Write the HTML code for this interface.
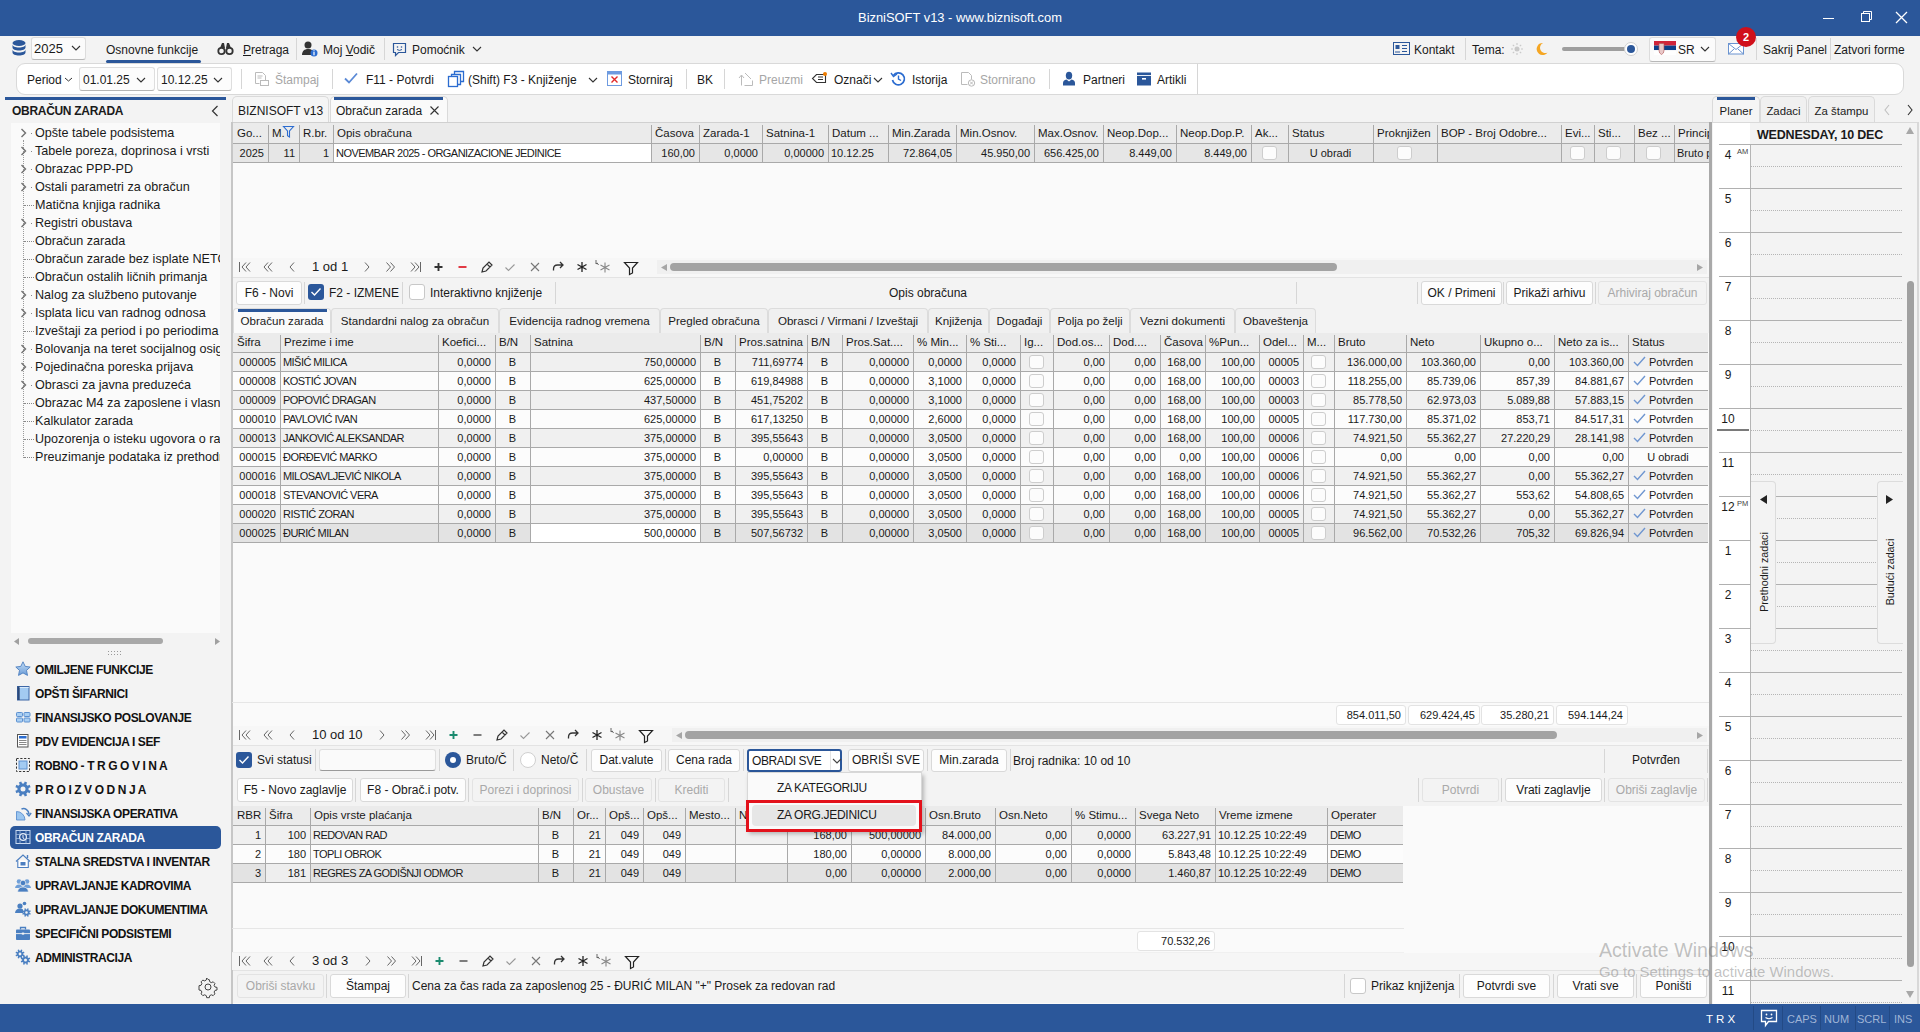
<!DOCTYPE html><html><head><meta charset="utf-8"><title>BizniSOFT</title><style>
*{margin:0;padding:0;box-sizing:border-box}
html,body{width:1920px;height:1032px;overflow:hidden;background:#f3f3f3;font-family:"Liberation Sans",sans-serif;color:#1a1a1a}
.t{position:absolute;white-space:nowrap;font-size:12px;line-height:14px}
.b{position:absolute}
.g{font-size:11px;line-height:19px;overflow:hidden;padding:0 4px}
.dis{color:#a6a6a6}
.btn{position:absolute;background:#fdfdfd;border:1px solid #d9d9d9;border-radius:3px;font-size:12px;text-align:center;white-space:nowrap}
.btn.d{background:#f3f3f3;color:#a9a9a9;border-color:#e3e3e3}
.sep{position:absolute;width:1px;background:#d6d6d6}
.cb{position:absolute;width:15px;height:15px;border:1px solid #c8c8c8;border-radius:3px;background:#fff}
.cbon{position:absolute;width:15px;height:15px;border-radius:3px;background:#2b579a}
svg{position:absolute;overflow:visible}
</style></head><body>
<div class="b " style="left:0px;top:0px;width:1920px;height:36px;background:#2b579a"></div>
<div class="t " style="left:0px;top:11px;color:#fff;font-size:12.9px;width:1920px;text-align:center">BizniSOFT v13 - www.biznisoft.com</div>
<svg style="left:1820px;top:10px" width="100" height="16"><line x1="3" y1="8.5" x2="14" y2="8.5" stroke="#fff" stroke-width="1"/><rect x="41.5" y="3.5" width="8" height="8" fill="none" stroke="#fff"/><path d="M43.5 3.5V1.5h8v8h-2" fill="none" stroke="#fff"/><path d="M76 2L87 13M87 2L76 13" stroke="#fff" stroke-width="1.3"/></svg>
<svg style="left:12px;top:40px" width="14" height="16"><ellipse cx="7" cy="3" rx="6.5" ry="3" fill="#2b579a"/><path d="M0.5 4.5v3c0 1.7 2.9 3 6.5 3s6.5-1.3 6.5-3v-3c0 1.7-2.9 3-6.5 3s-6.5-1.3-6.5-3z" fill="#2b579a"/><path d="M0.5 9.5v3c0 1.7 2.9 3 6.5 3s6.5-1.3 6.5-3v-3c0 1.7-2.9 3-6.5 3s-6.5-1.3-6.5-3z" fill="#2b579a"/></svg>
<div class="b " style="left:31px;top:37px;width:55px;height:23px;background:#fbfbfb;border:1px solid #dcdcdc;border-bottom-color:#b8b8b8;border-radius:3px"></div>
<div class="t " style="left:34px;top:42px;font-size:13px">2025</div>
<svg style="left:71px;top:45px" width="10" height="6"><path d="M1 1l4 4 4-4" fill="none" stroke="#333" stroke-width="1.1"/></svg>
<div class="t " style="left:106px;top:43px;font-size:12px">Osnovne funkcije</div>
<div class="b " style="left:106px;top:60px;width:95px;height:3px;background:#2b579a;border-radius:2px"></div>
<svg style="left:218px;top:42px" width="15" height="13"><circle cx="3.5" cy="9" r="3.2" fill="none" stroke="#333" stroke-width="1.8"/><circle cx="11.5" cy="9" r="3.2" fill="none" stroke="#333" stroke-width="1.8"/><path d="M2 6L4 1h2l1 5M13 6L11 1H9L8 6" fill="#333"/></svg>
<div class="t" style="left:243px;top:43px;font-size:12px"><u>P</u>retraga</div>
<div class="sep" style="left:296px;top:38px;height:22px"></div>
<svg style="left:302px;top:41px" width="16" height="16"><circle cx="6" cy="4" r="3.5" fill="#333"/><path d="M0 14c0-4 2.5-6 6-6s4 1 4.5 2L9 14z" fill="#333"/><circle cx="12" cy="12" r="3.5" fill="#2b6cd0"/><rect x="11.4" y="11" width="1.2" height="3.3" fill="#fff"/><rect x="11.4" y="9.3" width="1.2" height="1.1" fill="#fff"/></svg>
<div class="t" style="left:323px;top:43px;font-size:12px">Moj <u>V</u>odič</div>
<div class="sep" style="left:384px;top:38px;height:22px"></div>
<svg style="left:392px;top:42px" width="15" height="14"><path d="M1.5 1.5h12v9h-7l-3 3v-3h-2z" fill="none" stroke="#2b579a" stroke-width="1.2"/><circle cx="5.5" cy="5" r=".8" fill="#2b579a"/><circle cx="9.5" cy="5" r=".8" fill="#2b579a"/><path d="M5 7.5q2.5 1.8 5 0" fill="none" stroke="#2b579a"/></svg>
<div class="t " style="left:412px;top:43px;font-size:12px">Pomoćnik</div>
<svg style="left:472px;top:46px" width="10" height="6"><path d="M1 1l4 4 4-4" fill="none" stroke="#333" stroke-width="1.1"/></svg>
<svg style="left:1393px;top:42px" width="17" height="13"><rect x="0.5" y="0.5" width="16" height="12" fill="none" stroke="#2b579a"/><rect x="2.5" y="3" width="4" height="4" fill="#2b579a"/><path d="M2 10h5M9 3.5h5M9 6.5h5M9 9.5h5" stroke="#2b579a"/></svg>
<div class="t " style="left:1414px;top:43px;font-size:12px">Kontakt</div>
<div class="sep" style="left:1465px;top:38px;height:22px"></div>
<div class="t " style="left:1472px;top:43px;font-size:12px">Tema:</div>
<svg style="left:1511px;top:43px" width="12" height="12"><circle cx="6" cy="6" r="2.5" fill="#c8c8c8"/><path d="M6 0v2M6 10v2M0 6h2M10 6h2M1.8 1.8l1.4 1.4M8.8 8.8l1.4 1.4M1.8 10.2l1.4-1.4M8.8 3.2l1.4-1.4" stroke="#c8c8c8" stroke-width="1.1"/></svg>
<svg style="left:1536px;top:42px" width="12" height="13"><path d="M7 1a6 6 0 1 0 4.5 9.5A5 5 0 0 1 7 1z" fill="#f5a623"/></svg>
<div class="b " style="left:1562px;top:47px;width:72px;height:4px;background:#9e9e9e;border-radius:2px"></div>
<div class="b " style="left:1624px;top:42px;width:14px;height:14px;background:#fff;border:1px solid #d0d0d0;border-radius:7px"></div>
<div class="b " style="left:1627px;top:45px;width:8px;height:8px;background:#2b579a;border-radius:4px"></div>
<div class="b " style="left:1649px;top:37px;width:67px;height:25px;background:#fbfbfb;border:1px solid #dcdcdc;border-bottom-color:#b8b8b8;border-radius:3px"></div>
<svg style="left:1654px;top:41px" width="22" height="14"><rect width="22" height="4.6" fill="#d0243a"/><rect y="4.6" width="22" height="4.6" fill="#0c3f8a"/><rect y="9.2" width="22" height="4.8" fill="#fff"/><path d="M5 2.5h5v7q0 3-2.5 4-2.5-1-2.5-4z" fill="#e8c8c8" stroke="#b05050" stroke-width=".6"/></svg>
<div class="t " style="left:1678px;top:43px;font-size:12px">SR</div>
<svg style="left:1700px;top:46px" width="10" height="6"><path d="M1 1l4 4 4-4" fill="none" stroke="#333" stroke-width="1.1"/></svg>
<svg style="left:1728px;top:43px" width="16" height="12"><rect x="0.5" y="0.5" width="15" height="10.5" fill="#fff" stroke="#6a93d0"/><path d="M0.5 0.5l7.5 6 7.5-6M0.5 11l5.5-5M15.5 11l-5.5-5" fill="none" stroke="#6a93d0"/></svg>
<div class="b " style="left:1736px;top:27px;width:20px;height:20px;background:#d0101b;border-radius:10px"></div>
<div class="t " style="left:1736px;top:30px;width:20px;text-align:center;color:#fff;font-weight:bold;font-size:11px">2</div>
<div class="sep" style="left:1756px;top:38px;height:22px"></div>
<div class="t " style="left:1763px;top:43px;font-size:12px">Sakrij Panel</div>
<div class="sep" style="left:1830px;top:38px;height:22px"></div>
<div class="t " style="left:1834px;top:43px;font-size:12px">Zatvori forme</div>
<div class="b " style="left:16px;top:63px;width:1888px;height:32px;background:#fff;border:1px solid #d9d9d9;border-radius:9px"></div>
<div class="t " style="left:27px;top:73px;font-size:12px">Period</div>
<svg style="left:64px;top:77px" width="9" height="5"><path d="M1 1l3.5 3 3.5-3" fill="none" stroke="#333"/></svg>
<div class="b " style="left:79px;top:67px;width:76px;height:24px;background:#fcfcfc;border:1px solid #dedede;border-bottom-color:#b5b5b5;border-radius:3px"></div>
<div class="t " style="left:83px;top:73px;font-size:12px">01.01.25</div>
<svg style="left:136px;top:77px" width="10" height="6"><path d="M1 1l4 4 4-4" fill="none" stroke="#333" stroke-width="1.1"/></svg>
<div class="b " style="left:157px;top:67px;width:75px;height:24px;background:#fcfcfc;border:1px solid #dedede;border-bottom-color:#b5b5b5;border-radius:3px"></div>
<div class="t " style="left:161px;top:73px;font-size:12px">10.12.25</div>
<svg style="left:213px;top:77px" width="10" height="6"><path d="M1 1l4 4 4-4" fill="none" stroke="#333" stroke-width="1.1"/></svg>
<div class="sep" style="left:241px;top:69px;height:20px"></div>
<svg style="left:253px;top:71px" width="16" height="16"><path d="M2.5 1.5h7l3 3v5" fill="none" stroke="#bbb"/><path d="M2.5 1.5v11h4" fill="none" stroke="#bbb"/><rect x="7.5" y="9.5" width="8" height="5" fill="none" stroke="#bbb"/><path d="M4.5 5h5M4.5 7h4" stroke="#bbb"/></svg>
<div class="t dis" style="left:275px;top:73px;font-size:12px">Štampaj</div>
<div class="sep" style="left:332px;top:69px;height:20px"></div>
<svg style="left:344px;top:72px" width="14" height="12"><path d="M1 6.5l4 4 8-9" fill="none" stroke="#5b8ad6" stroke-width="1.8"/></svg>
<div class="t " style="left:366px;top:73px;font-size:12px">F11 - Potvrdi</div>
<svg style="left:448px;top:71px" width="16" height="16"><rect x="0.5" y="5.5" width="9" height="10" fill="none" stroke="#2b6cd0" stroke-width="1.3"/><path d="M3.5 5.5v-2h9v10h-3M6.5 3.5v-3h9v10h-3" fill="none" stroke="#2b6cd0" stroke-width="1.3"/></svg>
<div class="t " style="left:468px;top:73px;font-size:12px">(Shift) F3 - Knjiženje</div>
<svg style="left:588px;top:77px" width="10" height="6"><path d="M1 1l4 4 4-4" fill="none" stroke="#333" stroke-width="1.1"/></svg>
<svg style="left:607px;top:71px" width="15" height="15"><rect x="0.5" y="0.5" width="14" height="14" fill="#fff" stroke="#6e9be0"/><rect x="0.5" y="0.5" width="14" height="3" fill="#6e9be0"/><path d="M4.5 5.5l6 6M10.5 5.5l-6 6" stroke="#e02828" stroke-width="1.4"/></svg>
<div class="t " style="left:628px;top:73px;font-size:12px">Storniraj</div>
<div class="sep" style="left:686px;top:69px;height:20px"></div>
<div class="t " style="left:697px;top:73px;font-size:12px">BK</div>
<div class="sep" style="left:724px;top:69px;height:20px"></div>
<svg style="left:738px;top:71px" width="15" height="15"><path d="M3.5 14.5v-10M1 7l2.5-3L6 7" fill="none" stroke="#bbb"/><path d="M6.5 14.5h8v-5" fill="none" stroke="#bbb"/><path d="M7 2l6 6" stroke="#bbb"/></svg>
<div class="t dis" style="left:759px;top:73px;font-size:12px">Preuzmi</div>
<svg style="left:811px;top:72px" width="16" height="13"><path d="M5.5 2.5h9v8h-9l-4-4z" fill="none" stroke="#333" stroke-width="1.1"/><path d="M7 5h5M7 7.5h5" stroke="#333"/><circle cx="14" cy="2" r="2" fill="#f07d00"/></svg>
<div class="t " style="left:834px;top:73px;font-size:12px">Označi</div>
<svg style="left:873px;top:77px" width="10" height="6"><path d="M1 1l4 4 4-4" fill="none" stroke="#333" stroke-width="1.1"/></svg>
<svg style="left:891px;top:71px" width="15" height="15"><path d="M2.4 4.5A6 6 0 1 1 1.5 9" fill="none" stroke="#2b6cd0" stroke-width="1.7"/><path d="M0 2l2.5 3.5L6 3" fill="none" stroke="#2b6cd0" stroke-width="1.4"/><path d="M7.5 4.5v3.5l2.5 1.5" fill="none" stroke="#2b6cd0" stroke-width="1.4"/></svg>
<div class="t " style="left:912px;top:73px;font-size:12px">Istorija</div>
<svg style="left:960px;top:71px" width="15" height="16"><path d="M1.5 1.5h7l3 3v4M1.5 1.5v12h6" fill="none" stroke="#bbb"/><circle cx="11.5" cy="12" r="3.2" fill="none" stroke="#bbb"/><path d="M10 10.5l3 3M13 10.5l-3 3" stroke="#bbb"/></svg>
<div class="t dis" style="left:980px;top:73px;font-size:12px">Stornirano</div>
<div class="sep" style="left:1049px;top:69px;height:20px"></div>
<svg style="left:1063px;top:71px" width="14" height="15"><ellipse cx="6" cy="4.6" rx="3.2" ry="3.9" fill="#2b579a"/><path d="M0 14.5v-2.5q0-3 3.5-3.5L6 10.5l2.5-2Q12 9 12 12v2.5z" fill="#2b579a"/></svg>
<div class="t " style="left:1083px;top:73px;font-size:12px">Partneri</div>
<svg style="left:1137px;top:71px" width="15" height="15"><rect x="0" y="1.5" width="14" height="2.6" fill="#2b579a"/><rect x="0" y="5" width="14" height="9.5" fill="#2b579a"/><rect x="5" y="7" width="4" height="1.6" fill="#fff"/></svg>
<div class="t " style="left:1157px;top:73px;font-size:12px">Artikli</div>
<div class="sep" style="left:1197px;top:64px;height:30px"></div>
<div class="b " style="left:5px;top:97px;width:221px;height:3px;background:#2b579a"></div>
<div class="t " style="left:12px;top:104px;font-size:12px;font-weight:bold;letter-spacing:-0.3px">OBRAČUN ZARADA</div>
<svg style="left:211px;top:105px" width="8" height="12"><path d="M6.5 1L1.5 6l5 5" fill="none" stroke="#333" stroke-width="1.2"/></svg>
<div class="b " style="left:11px;top:123px;width:209px;height:510px;background:#fafafa"></div>
<div class="b" style="left:23px;top:140px;width:0;height:318px;border-left:1px dotted #9a9a9a"></div>
<div style="position:absolute;left:11px;top:123px;width:209px;height:510px;overflow:hidden">
<svg style="left:8.5px;top:4.8px" width="7" height="10"><path d="M1.5 1l4 4-4 4" fill="none" stroke="#707070" stroke-width="1.4"/></svg>
<div class="b" style="left:20px;top:9.8px;width:1px;height:1px;background:#888"></div>
<div class="t" style="left:24px;top:2.8px;font-size:12.6px">Opšte tabele podsistema</div>
<svg style="left:8.5px;top:22.8px" width="7" height="10"><path d="M1.5 1l4 4-4 4" fill="none" stroke="#707070" stroke-width="1.4"/></svg>
<div class="b" style="left:20px;top:27.8px;width:1px;height:1px;background:#888"></div>
<div class="t" style="left:24px;top:20.8px;font-size:12.6px">Tabele poreza, doprinosa i vrsti</div>
<svg style="left:8.5px;top:40.8px" width="7" height="10"><path d="M1.5 1l4 4-4 4" fill="none" stroke="#707070" stroke-width="1.4"/></svg>
<div class="b" style="left:20px;top:45.8px;width:1px;height:1px;background:#888"></div>
<div class="t" style="left:24px;top:38.8px;font-size:12.6px">Obrazac PPP-PD</div>
<svg style="left:8.5px;top:58.8px" width="7" height="10"><path d="M1.5 1l4 4-4 4" fill="none" stroke="#707070" stroke-width="1.4"/></svg>
<div class="b" style="left:20px;top:63.8px;width:1px;height:1px;background:#888"></div>
<div class="t" style="left:24px;top:56.8px;font-size:12.6px">Ostali parametri za obračun</div>
<div class="b" style="left:13px;top:81.8px;width:10px;height:0;border-top:1px dotted #888"></div>
<div class="t" style="left:24px;top:74.8px;font-size:12.6px">Matična knjiga radnika</div>
<svg style="left:8.5px;top:94.8px" width="7" height="10"><path d="M1.5 1l4 4-4 4" fill="none" stroke="#707070" stroke-width="1.4"/></svg>
<div class="b" style="left:20px;top:99.8px;width:1px;height:1px;background:#888"></div>
<div class="t" style="left:24px;top:92.8px;font-size:12.6px">Registri obustava</div>
<div class="b" style="left:13px;top:117.8px;width:10px;height:0;border-top:1px dotted #888"></div>
<div class="t" style="left:24px;top:110.8px;font-size:12.6px">Obračun zarada</div>
<div class="b" style="left:13px;top:135.8px;width:10px;height:0;border-top:1px dotted #888"></div>
<div class="t" style="left:24px;top:128.8px;font-size:12.6px">Obračun zarade bez isplate NETO</div>
<div class="b" style="left:13px;top:153.8px;width:10px;height:0;border-top:1px dotted #888"></div>
<div class="t" style="left:24px;top:146.8px;font-size:12.6px">Obračun ostalih ličnih primanja</div>
<svg style="left:8.5px;top:166.8px" width="7" height="10"><path d="M1.5 1l4 4-4 4" fill="none" stroke="#707070" stroke-width="1.4"/></svg>
<div class="b" style="left:20px;top:171.8px;width:1px;height:1px;background:#888"></div>
<div class="t" style="left:24px;top:164.8px;font-size:12.6px">Nalog za službeno putovanje</div>
<svg style="left:8.5px;top:184.8px" width="7" height="10"><path d="M1.5 1l4 4-4 4" fill="none" stroke="#707070" stroke-width="1.4"/></svg>
<div class="b" style="left:20px;top:189.8px;width:1px;height:1px;background:#888"></div>
<div class="t" style="left:24px;top:182.8px;font-size:12.6px">Isplata licu van radnog odnosa</div>
<div class="b" style="left:13px;top:207.8px;width:10px;height:0;border-top:1px dotted #888"></div>
<div class="t" style="left:24px;top:200.8px;font-size:12.6px">Izveštaji za period i po periodima</div>
<svg style="left:8.5px;top:220.8px" width="7" height="10"><path d="M1.5 1l4 4-4 4" fill="none" stroke="#707070" stroke-width="1.4"/></svg>
<div class="b" style="left:20px;top:225.8px;width:1px;height:1px;background:#888"></div>
<div class="t" style="left:24px;top:218.8px;font-size:12.6px">Bolovanja na teret socijalnog osiguranja</div>
<svg style="left:8.5px;top:238.8px" width="7" height="10"><path d="M1.5 1l4 4-4 4" fill="none" stroke="#707070" stroke-width="1.4"/></svg>
<div class="b" style="left:20px;top:243.8px;width:1px;height:1px;background:#888"></div>
<div class="t" style="left:24px;top:236.8px;font-size:12.6px">Pojedinačna poreska prijava</div>
<svg style="left:8.5px;top:256.8px" width="7" height="10"><path d="M1.5 1l4 4-4 4" fill="none" stroke="#707070" stroke-width="1.4"/></svg>
<div class="b" style="left:20px;top:261.8px;width:1px;height:1px;background:#888"></div>
<div class="t" style="left:24px;top:254.8px;font-size:12.6px">Obrasci za javna preduzeća</div>
<div class="b" style="left:13px;top:279.8px;width:10px;height:0;border-top:1px dotted #888"></div>
<div class="t" style="left:24px;top:272.8px;font-size:12.6px">Obrazac M4 za zaposlene i vlasnike</div>
<div class="b" style="left:13px;top:297.8px;width:10px;height:0;border-top:1px dotted #888"></div>
<div class="t" style="left:24px;top:290.8px;font-size:12.6px">Kalkulator zarada</div>
<div class="b" style="left:13px;top:315.8px;width:10px;height:0;border-top:1px dotted #888"></div>
<div class="t" style="left:24px;top:308.8px;font-size:12.6px">Upozorenja o isteku ugovora o radu</div>
<div class="b" style="left:13px;top:333.8px;width:10px;height:0;border-top:1px dotted #888"></div>
<div class="t" style="left:24px;top:326.8px;font-size:12.6px">Preuzimanje podataka iz prethodnih</div>
</div>
<svg style="left:14px;top:637px" width="206" height="9"><path d="M0 4.5L5 1v7z" fill="#a0a0a0"/><path d="M206 4.5L201 1v7z" fill="#a0a0a0"/></svg>
<div class="b " style="left:28px;top:638px;width:135px;height:6px;background:#a8a8a8;border-radius:3px"></div>
<svg style="left:107px;top:650px" width="16" height="6"><rect x="1" y="1" width="1" height="1" fill="#999"/><rect x="1" y="4" width="1" height="1" fill="#999"/><rect x="4" y="1" width="1" height="1" fill="#999"/><rect x="4" y="4" width="1" height="1" fill="#999"/><rect x="7" y="1" width="1" height="1" fill="#999"/><rect x="7" y="4" width="1" height="1" fill="#999"/><rect x="10" y="1" width="1" height="1" fill="#999"/><rect x="10" y="4" width="1" height="1" fill="#999"/><rect x="13" y="1" width="1" height="1" fill="#999"/><rect x="13" y="4" width="1" height="1" fill="#999"/></svg>
<div class="t" style="left:35px;top:663px;font-size:12px;font-weight:bold;letter-spacing:-0.4px;color:#111">OMILJENE FUNKCIJE</div>
<div class="t" style="left:35px;top:687px;font-size:12px;font-weight:bold;letter-spacing:-0.4px;color:#111">OPŠTI ŠIFARNICI</div>
<div class="t" style="left:35px;top:711px;font-size:12px;font-weight:bold;letter-spacing:-0.4px;color:#111">FINANSIJSKO POSLOVANJE</div>
<div class="t" style="left:35px;top:735px;font-size:12px;font-weight:bold;letter-spacing:-0.4px;color:#111">PDV EVIDENCIJA I SEF</div>
<div class="t" style="left:35px;top:759px;font-size:12px;font-weight:bold;letter-spacing:-0.4px;color:#111">ROBNO - T R G O V I N A</div>
<div class="t" style="left:35px;top:783px;font-size:12px;font-weight:bold;letter-spacing:-0.4px;color:#111">P R O I Z V O D N J A</div>
<div class="t" style="left:35px;top:807px;font-size:12px;font-weight:bold;letter-spacing:-0.4px;color:#111">FINANSIJSKA OPERATIVA</div>
<div class="b " style="left:10px;top:826px;width:211px;height:23px;background:#2b579a;border-radius:5px"></div>
<div class="t" style="left:35px;top:831px;font-size:12px;font-weight:bold;letter-spacing:-0.4px;color:#fff">OBRAČUN ZARADA</div>
<div class="t" style="left:35px;top:855px;font-size:12px;font-weight:bold;letter-spacing:-0.4px;color:#111">STALNA SREDSTVA I INVENTAR</div>
<div class="t" style="left:35px;top:879px;font-size:12px;font-weight:bold;letter-spacing:-0.4px;color:#111">UPRAVLJANJE KADROVIMA</div>
<div class="t" style="left:35px;top:903px;font-size:12px;font-weight:bold;letter-spacing:-0.4px;color:#111">UPRAVLJANJE DOKUMENTIMA</div>
<div class="t" style="left:35px;top:927px;font-size:12px;font-weight:bold;letter-spacing:-0.4px;color:#111">SPECIFIČNI PODSISTEMI</div>
<div class="t" style="left:35px;top:951px;font-size:12px;font-weight:bold;letter-spacing:-0.4px;color:#111">ADMINISTRACIJA</div>
<svg style="left:15px;top:661px" width="16" height="16"><defs><linearGradient id="sg" x1="0" y1="0" x2="0" y2="1"><stop offset="0" stop-color="#c4def7"/><stop offset="1" stop-color="#6a9bd6"/></linearGradient></defs><path d="M8 0.8l2.2 4.6 5 .6-3.7 3.4 1 5L8 11.9l-4.5 2.5 1-5L.8 6l5-.6z" fill="url(#sg)" stroke="#4d7fc0" stroke-width=".9" stroke-linejoin="round"/></svg>
<svg style="left:15px;top:685px" width="16" height="16"><rect x="2.5" y="1.5" width="11.5" height="13.5" fill="#a3cbf2" stroke="#3d67a6"/><rect x="2.5" y="1.5" width="2.2" height="13.5" fill="#2b4878"/><path d="M4.7 2.5h9" stroke="#d9ebfb"/></svg>
<svg style="left:15px;top:709px" width="16" height="16"><rect x="1.5" y="3.5" width="6" height="4" rx=".8" fill="#a9cff3" stroke="#5c90d0"/><rect x="9" y="3.5" width="6" height="4" rx=".8" fill="#a9cff3" stroke="#5c90d0"/><rect x="1.5" y="9" width="6" height="4" rx=".8" fill="#a9cff3" stroke="#5c90d0"/><rect x="9" y="9" width="6" height="4" rx=".8" fill="#a9cff3" stroke="#5c90d0"/></svg>
<svg style="left:15px;top:733px" width="16" height="16"><rect x="2.5" y="1.5" width="10.5" height="12.5" fill="#fff" stroke="#555"/><rect x="4" y="3" width="7.5" height="2.5" fill="#2b6cd0"/><path d="M4 7.5h7.5M4 9.5h7.5M4 11.5h7.5" stroke="#888"/></svg>
<svg style="left:15px;top:757px" width="16" height="16"><rect x="1.5" y="1.5" width="13" height="13" fill="none" stroke="#333" stroke-dasharray="2.2 1.6"/><rect x="4" y="4" width="8" height="8" fill="#a3cbf2" stroke="#5c90d0"/></svg>
<svg style="left:15px;top:781px" width="16" height="16"><path d="M13.60 8.00L13.52 8.92L15.60 9.76L14.62 12.13L12.56 11.26L11.96 11.96L11.26 12.56L12.13 14.62L9.76 15.60L8.92 13.52L8.00 13.60L7.08 13.52L6.24 15.60L3.87 14.62L4.74 12.56L4.04 11.96L3.44 11.26L1.38 12.13L0.40 9.76L2.48 8.92L2.40 8.00L2.48 7.08L0.40 6.24L1.38 3.87L3.44 4.74L4.04 4.04L4.74 3.44L3.87 1.38L6.24 0.40L7.08 2.48L8.00 2.40L8.92 2.48L9.76 0.40L12.13 1.38L11.26 3.44L11.96 4.04L12.56 4.74L14.62 3.87L15.60 6.24L13.52 7.08ZM10.50 8.00A2.5 2.5 0 1 0 5.50 8.00A2.5 2.5 0 1 0 10.50 8.00Z" fill="#4a7fc1" fill-rule="evenodd"/></svg>
<svg style="left:15px;top:805px" width="16" height="16"><path d="M1.5 15V6.5a8.5 8.5 0 0 1 8.5 8.5z" fill="#9cc6ef" stroke="#5c90d0" stroke-width=".9"/><path d="M6.5 4a5.5 5.5 0 0 1 7.5 5" fill="none" stroke="#4a7fc1" stroke-width="1.5"/><path d="M11.5 8l2.5 3 2.2-3" fill="none" stroke="#4a7fc1" stroke-width="1.3"/></svg>
<svg style="left:15px;top:829px" width="16" height="16"><rect x="1" y="1.5" width="14" height="13" fill="none" stroke="#c9daf0" stroke-width="1"/><path d="M1 5.5h14M1 9.5h14M5 1.5v13M11 1.5v13" stroke="#9fbbe0" stroke-width=".8"/><circle cx="8" cy="8" r="3.4" fill="#2b579a" stroke="#e8f0fa" stroke-width="1.2"/><path d="M8 6v3l1.5 1" stroke="#e8f0fa" stroke-width="1" fill="none"/></svg>
<svg style="left:15px;top:853px" width="16" height="16"><path d="M1 8.5L8 2l7 6.5" fill="none" stroke="#4d7fc0" stroke-width="1.2"/><path d="M12.5 2v3" stroke="#4d7fc0" stroke-width="1.4"/><path d="M2.8 7.5v7h10.5v-7" fill="#fff" stroke="#4d7fc0" stroke-width="1.1"/><rect x="5.5" y="9" width="5" height="3.5" fill="#4d7fc0"/></svg>
<svg style="left:15px;top:877px" width="16" height="16"><circle cx="4" cy="4.5" r="2.3" fill="#6f9fd8"/><circle cx="12" cy="4.5" r="2.3" fill="#6f9fd8"/><path d="M0 11q.5-3.5 4-3.5t4 3.5zM8 11q.5-3.5 4-3.5t4 3.5z" fill="#6f9fd8"/><circle cx="8" cy="6" r="2.8" fill="#4a7fc1" stroke="#f3f3f3" stroke-width=".7"/><path d="M2.5 15q.6-5 5.5-5t5.5 5z" fill="#4a7fc1" stroke="#f3f3f3" stroke-width=".7"/></svg>
<svg style="left:15px;top:901px" width="16" height="16"><circle cx="5" cy="5" r="2.6" fill="#4a7fc1"/><circle cx="9.5" cy="2.5" r="1.8" fill="#4a7fc1"/><path d="M0 12q.5-4.5 5-4.5 2 0 3 1v3.5z" fill="#4a7fc1"/><path d="M14.60 11.50L14.56 12.01L15.79 12.49L15.23 13.83L14.02 13.30L13.69 13.69L13.30 14.02L13.83 15.23L12.49 15.79L12.01 14.56L11.50 14.60L10.99 14.56L10.51 15.79L9.17 15.23L9.70 14.02L9.31 13.69L8.98 13.30L7.77 13.83L7.21 12.49L8.44 12.01L8.40 11.50L8.44 10.99L7.21 10.51L7.77 9.17L8.98 9.70L9.31 9.31L9.70 8.98L9.17 7.77L10.51 7.21L10.99 8.44L11.50 8.40L12.01 8.44L12.49 7.21L13.83 7.77L13.30 8.98L13.69 9.31L14.02 9.70L15.23 9.17L15.79 10.51L14.56 10.99ZM12.80 11.50A1.3 1.3 0 1 0 10.20 11.50A1.3 1.3 0 1 0 12.80 11.50Z" fill="#4a7fc1" fill-rule="evenodd"/></svg>
<svg style="left:15px;top:925px" width="16" height="16"><path d="M5.5 4.5V2.5h5v2" fill="none" stroke="#4a7fc1" stroke-width="1.3"/><rect x="1" y="4.5" width="14" height="10.5" rx=".8" fill="#4a7fc1"/><path d="M1 8.6h14" stroke="#f3f3f3" stroke-width=".9"/><rect x="6.8" y="7.6" width="2.4" height="2" fill="#f3f3f3"/></svg>
<svg style="left:15px;top:949px" width="16" height="16"><path d="M8.20 5.00L8.16 5.53L9.48 6.04L8.90 7.43L7.60 6.86L7.26 7.26L6.86 7.60L7.43 8.90L6.04 9.48L5.53 8.16L5.00 8.20L4.47 8.16L3.96 9.48L2.57 8.90L3.14 7.60L2.74 7.26L2.40 6.86L1.10 7.43L0.52 6.04L1.84 5.53L1.80 5.00L1.84 4.47L0.52 3.96L1.10 2.57L2.40 3.14L2.74 2.74L3.14 2.40L2.57 1.10L3.96 0.52L4.47 1.84L5.00 1.80L5.53 1.84L6.04 0.52L7.43 1.10L6.86 2.40L7.26 2.74L7.60 3.14L8.90 2.57L9.48 3.96L8.16 4.47ZM6.40 5.00A1.4 1.4 0 1 0 3.60 5.00A1.4 1.4 0 1 0 6.40 5.00Z" fill="#4a7fc1" fill-rule="evenodd"/><path d="M13.90 11.00L13.85 11.56L15.27 12.11L14.66 13.59L13.27 12.98L12.90 13.40L12.48 13.77L13.09 15.16L11.61 15.77L11.06 14.35L10.50 14.40L9.94 14.35L9.39 15.77L7.91 15.16L8.52 13.77L8.10 13.40L7.73 12.98L6.34 13.59L5.73 12.11L7.15 11.56L7.10 11.00L7.15 10.44L5.73 9.89L6.34 8.41L7.73 9.02L8.10 8.60L8.52 8.23L7.91 6.84L9.39 6.23L9.94 7.65L10.50 7.60L11.06 7.65L11.61 6.23L13.09 6.84L12.48 8.23L12.90 8.60L13.27 9.02L14.66 8.41L15.27 9.89L13.85 10.44ZM12.00 11.00A1.5 1.5 0 1 0 9.00 11.00A1.5 1.5 0 1 0 12.00 11.00Z" fill="#4a7fc1" fill-rule="evenodd"/></svg>
<svg style="left:199px;top:978px" width="18" height="18"><path d="M9 1.5l1.3.2.4 2 1.6.9 1.9-.8 1.7 1.7-.8 1.9.9 1.6 2 .4v2.6l-2 .4-.9 1.6.8 1.9-1.7 1.7-1.9-.8-1.6.9-.4 2H7.7l-.4-2-1.6-.9-1.9.8-1.7-1.7.8-1.9-.9-1.6-2-.4V7.7l2-.4.9-1.6-.8-1.9 1.7-1.7 1.9.8 1.6-.9.4-2z" fill="none" stroke="#444" stroke-width="1"/><circle cx="9" cy="9" r="3" fill="none" stroke="#444"/></svg>
<div class="b " style="left:231px;top:122px;width:1479px;height:882px;background:#fafafa;border-left:2px solid #c6c6c6"></div>
<div class="b " style="left:233px;top:122px;width:1476px;height:1px;background:#d0d0d0"></div>
<div class="b " style="left:232px;top:96px;width:97px;height:26px;background:#f5f5f5;border:1px solid #dadada;border-bottom:none;border-radius:5px 5px 0 0"></div>
<div class="t " style="left:238px;top:104px;font-size:12px">BIZNISOFT v13</div>
<div class="b " style="left:330px;top:96px;width:118px;height:26px;background:#fafafa;border:1px solid #dadada;border-bottom:none;border-radius:5px 5px 0 0"></div>
<div class="b " style="left:334px;top:97px;width:109px;height:3px;background:#2b579a"></div>
<div class="t " style="left:336px;top:104px;font-size:12px">Obračun zarada</div>
<svg style="left:430px;top:106px" width="9" height="9"><path d="M0.5 0.5l8 8M8.5 0.5l-8 8" stroke="#333" stroke-width="1.1"/></svg>
<div class="b " style="left:233px;top:123px;width:1477px;height:20px;background:#ebebeb"></div>
<div class="t g" style="left:233px;top:123px;width:35px;height:20px;line-height:20px;font-size:11.5px;padding:0 3px 0 4px">Go...</div>
<div class="t g" style="left:268px;top:123px;width:31px;height:20px;line-height:20px;font-size:11.5px;padding:0 3px 0 4px">M.</div>
<div class="t g" style="left:299px;top:123px;width:34px;height:20px;line-height:20px;font-size:11.5px;padding:0 3px 0 4px">R.br.</div>
<div class="t g" style="left:333px;top:123px;width:318px;height:20px;line-height:20px;font-size:11.5px;padding:0 3px 0 4px">Opis obračuna</div>
<div class="t g" style="left:651px;top:123px;width:48px;height:20px;line-height:20px;font-size:11.5px;padding:0 3px 0 4px">Časova</div>
<div class="t g" style="left:699px;top:123px;width:63px;height:20px;line-height:20px;font-size:11.5px;padding:0 3px 0 4px">Zarada-1</div>
<div class="t g" style="left:762px;top:123px;width:66px;height:20px;line-height:20px;font-size:11.5px;padding:0 3px 0 4px">Satnina-1</div>
<div class="t g" style="left:828px;top:123px;width:60px;height:20px;line-height:20px;font-size:11.5px;padding:0 3px 0 4px">Datum ...</div>
<div class="t g" style="left:888px;top:123px;width:68px;height:20px;line-height:20px;font-size:11.5px;padding:0 3px 0 4px">Min.Zarada</div>
<div class="t g" style="left:956px;top:123px;width:78px;height:20px;line-height:20px;font-size:11.5px;padding:0 3px 0 4px">Min.Osnov.</div>
<div class="t g" style="left:1034px;top:123px;width:69px;height:20px;line-height:20px;font-size:11.5px;padding:0 3px 0 4px">Max.Osnov.</div>
<div class="t g" style="left:1103px;top:123px;width:73px;height:20px;line-height:20px;font-size:11.5px;padding:0 3px 0 4px">Neop.Dop...</div>
<div class="t g" style="left:1176px;top:123px;width:75px;height:20px;line-height:20px;font-size:11.5px;padding:0 3px 0 4px">Neop.Dop.P.</div>
<div class="t g" style="left:1251px;top:123px;width:37px;height:20px;line-height:20px;font-size:11.5px;padding:0 3px 0 4px">Ak...</div>
<div class="t g" style="left:1288px;top:123px;width:85px;height:20px;line-height:20px;font-size:11.5px;padding:0 3px 0 4px">Status</div>
<div class="t g" style="left:1373px;top:123px;width:64px;height:20px;line-height:20px;font-size:11.5px;padding:0 3px 0 4px">Proknjižen</div>
<div class="t g" style="left:1437px;top:123px;width:124px;height:20px;line-height:20px;font-size:11.5px;padding:0 3px 0 4px">BOP - Broj Odobre...</div>
<div class="t g" style="left:1561px;top:123px;width:33px;height:20px;line-height:20px;font-size:11.5px;padding:0 3px 0 4px">Evi...</div>
<div class="t g" style="left:1594px;top:123px;width:40px;height:20px;line-height:20px;font-size:11.5px;padding:0 3px 0 4px">Sti...</div>
<div class="t g" style="left:1634px;top:123px;width:40px;height:20px;line-height:20px;font-size:11.5px;padding:0 3px 0 4px">Bez ...</div>
<div class="t g" style="left:1674px;top:123px;width:36px;height:20px;line-height:20px;font-size:11.5px;padding:0 3px 0 4px">Princip</div>
<div class="b " style="left:233px;top:144px;width:1477px;height:19px;background:#e6e6e6"></div>
<div class="t g" style="left:233px;top:144px;width:35px;height:18px;line-height:18px;text-align:right;padding:0 4px 0 3px">2025</div>
<div class="t g" style="left:268px;top:144px;width:31px;height:18px;line-height:18px;text-align:right;padding:0 4px 0 3px">11</div>
<div class="t g" style="left:299px;top:144px;width:34px;height:18px;line-height:18px;text-align:right;padding:0 4px 0 3px">1</div>
<div class="b " style="left:333px;top:144px;width:318px;height:19px;background:#ffffff"></div>
<div class="t g" style="left:333px;top:144px;width:318px;height:18px;line-height:18px;text-align:left;padding:0 3px 0 3px;letter-spacing:-0.55px">NOVEMBAR 2025 - ORGANIZACIONE JEDINICE</div>
<div class="t g" style="left:651px;top:144px;width:48px;height:18px;line-height:18px;text-align:right;padding:0 4px 0 3px">160,00</div>
<div class="t g" style="left:699px;top:144px;width:63px;height:18px;line-height:18px;text-align:right;padding:0 4px 0 3px">0,0000</div>
<div class="t g" style="left:762px;top:144px;width:66px;height:18px;line-height:18px;text-align:right;padding:0 4px 0 3px">0,00000</div>
<div class="t g" style="left:828px;top:144px;width:60px;height:18px;line-height:18px;text-align:left;padding:0 3px 0 3px">10.12.25</div>
<div class="t g" style="left:888px;top:144px;width:68px;height:18px;line-height:18px;text-align:right;padding:0 4px 0 3px">72.864,05</div>
<div class="t g" style="left:956px;top:144px;width:78px;height:18px;line-height:18px;text-align:right;padding:0 4px 0 3px">45.950,00</div>
<div class="t g" style="left:1034px;top:144px;width:69px;height:18px;line-height:18px;text-align:right;padding:0 4px 0 3px">656.425,00</div>
<div class="t g" style="left:1103px;top:144px;width:73px;height:18px;line-height:18px;text-align:right;padding:0 4px 0 3px">8.449,00</div>
<div class="t g" style="left:1176px;top:144px;width:75px;height:18px;line-height:18px;text-align:right;padding:0 4px 0 3px">8.449,00</div>
<div class="cb" style="left:1262px;top:146px;height:14px;border-color:#cdcdcd;background:#fcfcfc"></div>
<div class="t g" style="left:1288px;top:144px;width:85px;height:18px;line-height:18px;text-align:center;padding:0 3px 0 3px">U obradi</div>
<div class="cb" style="left:1397px;top:146px;height:14px;border-color:#cdcdcd;background:#fcfcfc"></div>
<div class="cb" style="left:1570px;top:146px;height:14px;border-color:#cdcdcd;background:#fcfcfc"></div>
<div class="cb" style="left:1606px;top:146px;height:14px;border-color:#cdcdcd;background:#fcfcfc"></div>
<div class="cb" style="left:1646px;top:146px;height:14px;border-color:#cdcdcd;background:#fcfcfc"></div>
<div class="t g" style="left:1674px;top:144px;width:36px;height:18px;line-height:18px;text-align:left;padding:0 3px 0 3px">Bruto p</div>
<div class="b" style="left:268px;top:125px;width:1px;height:38px;background:#a9a9a9"></div>
<div class="b" style="left:299px;top:125px;width:1px;height:38px;background:#a9a9a9"></div>
<div class="b" style="left:333px;top:125px;width:1px;height:38px;background:#a9a9a9"></div>
<div class="b" style="left:651px;top:125px;width:1px;height:38px;background:#a9a9a9"></div>
<div class="b" style="left:699px;top:125px;width:1px;height:38px;background:#a9a9a9"></div>
<div class="b" style="left:762px;top:125px;width:1px;height:38px;background:#a9a9a9"></div>
<div class="b" style="left:828px;top:125px;width:1px;height:38px;background:#a9a9a9"></div>
<div class="b" style="left:888px;top:125px;width:1px;height:38px;background:#a9a9a9"></div>
<div class="b" style="left:956px;top:125px;width:1px;height:38px;background:#a9a9a9"></div>
<div class="b" style="left:1034px;top:125px;width:1px;height:38px;background:#a9a9a9"></div>
<div class="b" style="left:1103px;top:125px;width:1px;height:38px;background:#a9a9a9"></div>
<div class="b" style="left:1176px;top:125px;width:1px;height:38px;background:#a9a9a9"></div>
<div class="b" style="left:1251px;top:125px;width:1px;height:38px;background:#a9a9a9"></div>
<div class="b" style="left:1288px;top:125px;width:1px;height:38px;background:#a9a9a9"></div>
<div class="b" style="left:1373px;top:125px;width:1px;height:38px;background:#a9a9a9"></div>
<div class="b" style="left:1437px;top:125px;width:1px;height:38px;background:#a9a9a9"></div>
<div class="b" style="left:1561px;top:125px;width:1px;height:38px;background:#a9a9a9"></div>
<div class="b" style="left:1594px;top:125px;width:1px;height:38px;background:#a9a9a9"></div>
<div class="b" style="left:1634px;top:125px;width:1px;height:38px;background:#a9a9a9"></div>
<div class="b" style="left:1674px;top:125px;width:1px;height:38px;background:#a9a9a9"></div>
<div class="b" style="left:233px;top:143px;width:1477px;height:1px;background:#a9a9a9"></div>
<div class="b" style="left:233px;top:162px;width:1477px;height:1px;background:#a9a9a9"></div>
<svg style="left:283px;top:126px" width="11" height="12"><path d="M0.5 0.5h10l-4 4.5v6l-2-1.2V5z" fill="none" stroke="#2b6cd0" stroke-width="1.1"/></svg>
<div class="b " style="left:233px;top:258px;width:1476px;height:19px;background:#f7f7f7"></div>
<svg style="left:238px;top:259px" width="400" height="16"><path d="M1.5 3v10" stroke="#666" stroke-width="1"/><path d="M8 3.5L4 8l4 4.5M12 3.5L8 8l4 4.5" fill="none" stroke="#666" stroke-width="1"/><path d="M30 3.5L26 8l4 4.5M34 3.5L30 8l4 4.5" fill="none" stroke="#666" stroke-width="1"/><path d="M56 3.5L52 8l4 4.5" fill="none" stroke="#666" stroke-width="1"/></svg>
<div class="t" style="left:312px;top:260px;font-size:13px">1 od 1</div>
<svg style="left:363px;top:259px" width="300" height="16"><path d="M2 3.5L6 8l-4 4.5" fill="none" stroke="#666"/><path d="M23.5 3.5L27.5 8l-4 4.5M27.5 3.5L31.5 8l-4 4.5" fill="none" stroke="#666"/><path d="M48 3.5L52 8l-4 4.5M52 3.5L56 8l-4 4.5M57.5 3v10" fill="none" stroke="#666"/><path d="M75.5 4v8M71.5 8h8" stroke="#333" stroke-width="1.9"/><path d="M95.5 8h8" stroke="#e0303a" stroke-width="1.9"/><path d="M119 13l1-4 6-6 3 3-6 6zM124 5l3 3" fill="none" stroke="#333" stroke-width="1.2"/><path d="M142.5 8.5l3 3 6-6" fill="none" stroke="#999" stroke-width="1.1"/><path d="M168 4l8 8M176 4l-8 8" stroke="#777" stroke-width="1.1"/><path d="M190.5 11.5v-1.5q0-4 4-4h5.5M197 3l3 3-3 3" fill="none" stroke="#333" stroke-width="1.3"/><path d="M219 3v10M214.5 5.5l9 5M214.5 10.5l9-5" stroke="#222" stroke-width="1.3"/><path d="M242 3.5v10M237.5 6l9 5M237.5 11l9-5" stroke="#888" stroke-width="1.1"/><path d="M233 1v4l1.2-1 1.3 2" fill="none" stroke="#555" stroke-width=".9"/><path d="M261.5 3.5h13l-5 5.5v5l-3 1.5v-6.5z" fill="none" stroke="#222" stroke-width="1.2"/></svg>
<div class="b " style="left:657px;top:260px;width:1050px;height:14px;background:#f0f0f0"></div>
<svg style="left:661px;top:263px" width="1042" height="9"><path d="M0 4.5L6 1v7z" fill="#a6a6a6"/><path d="M1042 4.5L1036 1v7z" fill="#a6a6a6"/></svg>
<div class="b " style="left:670px;top:263px;width:667px;height:8px;background:#a3a3a3;border-radius:4px"></div>
<div class="b " style="left:233px;top:277px;width:1476px;height:56px;background:#f3f3f3"></div>
<div class="b " style="left:233px;top:277px;width:1476px;height:1px;background:#e3e3e3"></div>
<div class="btn" style="left:236px;top:281px;width:66px;height:24px;line-height:22px">F6 - Novi</div>
<div class="sep" style="left:304px;top:282px;height:22px"></div>
<div class="cbon" style="left:308px;top:284px;width:16px;height:16px"></div>
<svg style="left:310px;top:287px" width="12" height="10"><path d="M1.5 5l3 3 6-6.5" fill="none" stroke="#fff" stroke-width="1.4"/></svg>
<div class="t " style="left:329px;top:286px;font-size:12px">F2 - IZMENE</div>
<div class="sep" style="left:402px;top:282px;height:22px"></div>
<div class="cb" style="left:409px;top:284px;width:16px;height:16px"></div>
<div class="t " style="left:430px;top:286px;font-size:12px">Interaktivno knjiženje</div>
<div class="sep" style="left:555px;top:282px;height:22px"></div>
<div class="t " style="left:889px;top:286px;font-size:12px">Opis obračuna</div>
<div class="sep" style="left:1296px;top:282px;height:22px"></div>
<div class="sep" style="left:1417px;top:282px;height:22px"></div>
<div class="btn" style="left:1421px;top:281px;width:81px;height:24px;line-height:22px">OK / Primeni</div>
<div class="sep" style="left:1503px;top:282px;height:22px"></div>
<div class="btn" style="left:1506px;top:281px;width:87px;height:24px;line-height:22px">Prikaži arhivu</div>
<div class="sep" style="left:1595px;top:282px;height:22px"></div>
<div class="btn d" style="left:1598px;top:281px;width:109px;height:24px;line-height:22px">Arhiviraj obračun</div>
<div class="b " style="left:233px;top:308px;width:98px;height:25px;background:#fafafa;border:1px solid #dcdcdc;border-bottom:none;border-radius:4px 4px 0 0"></div>
<div class="t" style="left:233px;top:314px;width:98px;text-align:center;font-size:11.6px">Obračun zarada</div>
<div class="b " style="left:331px;top:308px;width:168px;height:25px;background:#f0f0f0;border:1px solid #dcdcdc;border-bottom:none;border-radius:4px 4px 0 0"></div>
<div class="t" style="left:331px;top:314px;width:168px;text-align:center;font-size:11.6px">Standardni nalog za obračun</div>
<div class="b " style="left:499px;top:308px;width:161px;height:25px;background:#f0f0f0;border:1px solid #dcdcdc;border-bottom:none;border-radius:4px 4px 0 0"></div>
<div class="t" style="left:499px;top:314px;width:161px;text-align:center;font-size:11.6px">Evidencija radnog vremena</div>
<div class="b " style="left:660px;top:308px;width:108px;height:25px;background:#f0f0f0;border:1px solid #dcdcdc;border-bottom:none;border-radius:4px 4px 0 0"></div>
<div class="t" style="left:660px;top:314px;width:108px;text-align:center;font-size:11.6px">Pregled obračuna</div>
<div class="b " style="left:768px;top:308px;width:160px;height:25px;background:#f0f0f0;border:1px solid #dcdcdc;border-bottom:none;border-radius:4px 4px 0 0"></div>
<div class="t" style="left:768px;top:314px;width:160px;text-align:center;font-size:11.6px">Obrasci / Virmani / Izveštaji</div>
<div class="b " style="left:928px;top:308px;width:61px;height:25px;background:#f0f0f0;border:1px solid #dcdcdc;border-bottom:none;border-radius:4px 4px 0 0"></div>
<div class="t" style="left:928px;top:314px;width:61px;text-align:center;font-size:11.6px">Knjiženja</div>
<div class="b " style="left:989px;top:308px;width:61px;height:25px;background:#f0f0f0;border:1px solid #dcdcdc;border-bottom:none;border-radius:4px 4px 0 0"></div>
<div class="t" style="left:989px;top:314px;width:61px;text-align:center;font-size:11.6px">Događaji</div>
<div class="b " style="left:1050px;top:308px;width:80px;height:25px;background:#f0f0f0;border:1px solid #dcdcdc;border-bottom:none;border-radius:4px 4px 0 0"></div>
<div class="t" style="left:1050px;top:314px;width:80px;text-align:center;font-size:11.6px">Polja po želji</div>
<div class="b " style="left:1130px;top:308px;width:105px;height:25px;background:#f0f0f0;border:1px solid #dcdcdc;border-bottom:none;border-radius:4px 4px 0 0"></div>
<div class="t" style="left:1130px;top:314px;width:105px;text-align:center;font-size:11.6px">Vezni dokumenti</div>
<div class="b " style="left:1235px;top:308px;width:81px;height:25px;background:#f0f0f0;border:1px solid #dcdcdc;border-bottom:none;border-radius:4px 4px 0 0"></div>
<div class="t" style="left:1235px;top:314px;width:81px;text-align:center;font-size:11.6px">Obaveštenja</div>
<div class="b " style="left:238px;top:309px;width:89px;height:3px;background:#2b579a"></div>
<div class="b " style="left:233px;top:333px;width:1475px;height:19px;background:#ebebeb"></div>
<div class="t g" style="left:233px;top:333px;width:47px;height:19px;line-height:19px;font-size:11.5px;padding:0 3px 0 4px">Šifra</div>
<div class="t g" style="left:280px;top:333px;width:158px;height:19px;line-height:19px;font-size:11.5px;padding:0 3px 0 4px">Prezime i ime</div>
<div class="t g" style="left:438px;top:333px;width:57px;height:19px;line-height:19px;font-size:11.5px;padding:0 3px 0 4px">Koefici...</div>
<div class="t g" style="left:495px;top:333px;width:35px;height:19px;line-height:19px;font-size:11.5px;padding:0 3px 0 4px">B/N</div>
<div class="t g" style="left:530px;top:333px;width:170px;height:19px;line-height:19px;font-size:11.5px;padding:0 3px 0 4px">Satnina</div>
<div class="t g" style="left:700px;top:333px;width:35px;height:19px;line-height:19px;font-size:11.5px;padding:0 3px 0 4px">B/N</div>
<div class="t g" style="left:735px;top:333px;width:72px;height:19px;line-height:19px;font-size:11.5px;padding:0 3px 0 4px">Pros.satnina</div>
<div class="t g" style="left:807px;top:333px;width:35px;height:19px;line-height:19px;font-size:11.5px;padding:0 3px 0 4px">B/N</div>
<div class="t g" style="left:842px;top:333px;width:71px;height:19px;line-height:19px;font-size:11.5px;padding:0 3px 0 4px">Pros.Sat....</div>
<div class="t g" style="left:913px;top:333px;width:53px;height:19px;line-height:19px;font-size:11.5px;padding:0 3px 0 4px">% Min...</div>
<div class="t g" style="left:966px;top:333px;width:54px;height:19px;line-height:19px;font-size:11.5px;padding:0 3px 0 4px">% Sti...</div>
<div class="t g" style="left:1020px;top:333px;width:33px;height:19px;line-height:19px;font-size:11.5px;padding:0 3px 0 4px">Ig...</div>
<div class="t g" style="left:1053px;top:333px;width:56px;height:19px;line-height:19px;font-size:11.5px;padding:0 3px 0 4px">Dod.os...</div>
<div class="t g" style="left:1109px;top:333px;width:51px;height:19px;line-height:19px;font-size:11.5px;padding:0 3px 0 4px">Dod....</div>
<div class="t g" style="left:1160px;top:333px;width:45px;height:19px;line-height:19px;font-size:11.5px;padding:0 3px 0 4px">Časova</div>
<div class="t g" style="left:1205px;top:333px;width:54px;height:19px;line-height:19px;font-size:11.5px;padding:0 3px 0 4px">%Pun...</div>
<div class="t g" style="left:1259px;top:333px;width:44px;height:19px;line-height:19px;font-size:11.5px;padding:0 3px 0 4px">Odel...</div>
<div class="t g" style="left:1303px;top:333px;width:31px;height:19px;line-height:19px;font-size:11.5px;padding:0 3px 0 4px">M...</div>
<div class="t g" style="left:1334px;top:333px;width:72px;height:19px;line-height:19px;font-size:11.5px;padding:0 3px 0 4px">Bruto</div>
<div class="t g" style="left:1406px;top:333px;width:74px;height:19px;line-height:19px;font-size:11.5px;padding:0 3px 0 4px">Neto</div>
<div class="t g" style="left:1480px;top:333px;width:74px;height:19px;line-height:19px;font-size:11.5px;padding:0 3px 0 4px">Ukupno o...</div>
<div class="t g" style="left:1554px;top:333px;width:74px;height:19px;line-height:19px;font-size:11.5px;padding:0 3px 0 4px">Neto za is...</div>
<div class="t g" style="left:1628px;top:333px;width:80px;height:19px;line-height:19px;font-size:11.5px;padding:0 3px 0 4px">Status</div>
<div class="b " style="left:233px;top:353px;width:1475px;height:19px;background:#f0f0f0"></div>
<div class="t g" style="left:233px;top:353px;width:47px;height:18px;line-height:18px;text-align:right;padding:0 4px 0 3px">000005</div>
<div class="t g" style="left:280px;top:353px;width:158px;height:18px;line-height:18px;text-align:left;padding:0 3px 0 3px;letter-spacing:-0.55px">MIŠIĆ MILICA</div>
<div class="t g" style="left:438px;top:353px;width:57px;height:18px;line-height:18px;text-align:right;padding:0 4px 0 3px">0,0000</div>
<div class="t g" style="left:495px;top:353px;width:35px;height:18px;line-height:18px;text-align:center;padding:0 3px 0 3px">B</div>
<div class="t g" style="left:530px;top:353px;width:170px;height:18px;line-height:18px;text-align:right;padding:0 4px 0 3px">750,00000</div>
<div class="t g" style="left:700px;top:353px;width:35px;height:18px;line-height:18px;text-align:center;padding:0 3px 0 3px">B</div>
<div class="t g" style="left:735px;top:353px;width:72px;height:18px;line-height:18px;text-align:right;padding:0 4px 0 3px">711,69774</div>
<div class="t g" style="left:807px;top:353px;width:35px;height:18px;line-height:18px;text-align:center;padding:0 3px 0 3px">B</div>
<div class="t g" style="left:842px;top:353px;width:71px;height:18px;line-height:18px;text-align:right;padding:0 4px 0 3px">0,00000</div>
<div class="t g" style="left:913px;top:353px;width:53px;height:18px;line-height:18px;text-align:right;padding:0 4px 0 3px">0,0000</div>
<div class="t g" style="left:966px;top:353px;width:54px;height:18px;line-height:18px;text-align:right;padding:0 4px 0 3px">0,0000</div>
<div class="cb" style="left:1029px;top:355px;height:14px;border-color:#cdcdcd;background:#fcfcfc"></div>
<div class="t g" style="left:1053px;top:353px;width:56px;height:18px;line-height:18px;text-align:right;padding:0 4px 0 3px">0,00</div>
<div class="t g" style="left:1109px;top:353px;width:51px;height:18px;line-height:18px;text-align:right;padding:0 4px 0 3px">0,00</div>
<div class="t g" style="left:1160px;top:353px;width:45px;height:18px;line-height:18px;text-align:right;padding:0 4px 0 3px">168,00</div>
<div class="t g" style="left:1205px;top:353px;width:54px;height:18px;line-height:18px;text-align:right;padding:0 4px 0 3px">100,00</div>
<div class="t g" style="left:1259px;top:353px;width:44px;height:18px;line-height:18px;text-align:right;padding:0 4px 0 3px">00005</div>
<div class="cb" style="left:1311px;top:355px;height:14px;border-color:#cdcdcd;background:#fcfcfc"></div>
<div class="t g" style="left:1334px;top:353px;width:72px;height:18px;line-height:18px;text-align:right;padding:0 4px 0 3px">136.000,00</div>
<div class="t g" style="left:1406px;top:353px;width:74px;height:18px;line-height:18px;text-align:right;padding:0 4px 0 3px">103.360,00</div>
<div class="t g" style="left:1480px;top:353px;width:74px;height:18px;line-height:18px;text-align:right;padding:0 4px 0 3px">0,00</div>
<div class="t g" style="left:1554px;top:353px;width:74px;height:18px;line-height:18px;text-align:right;padding:0 4px 0 3px">103.360,00</div>
<svg style="left:1633px;top:356px" width="13" height="11"><path d="M1 6l3.5 3.5L12 1" fill="none" stroke="#6f96d0" stroke-width="1.4"/></svg>
<div class="t g" style="left:1649px;top:353px;height:18px;line-height:18px;padding:0">Potvrđen</div>
<div class="b " style="left:233px;top:372px;width:1475px;height:19px;background:#fcfcfc"></div>
<div class="t g" style="left:233px;top:372px;width:47px;height:18px;line-height:18px;text-align:right;padding:0 4px 0 3px">000008</div>
<div class="t g" style="left:280px;top:372px;width:158px;height:18px;line-height:18px;text-align:left;padding:0 3px 0 3px;letter-spacing:-0.55px">KOSTIĆ JOVAN</div>
<div class="t g" style="left:438px;top:372px;width:57px;height:18px;line-height:18px;text-align:right;padding:0 4px 0 3px">0,0000</div>
<div class="t g" style="left:495px;top:372px;width:35px;height:18px;line-height:18px;text-align:center;padding:0 3px 0 3px">B</div>
<div class="t g" style="left:530px;top:372px;width:170px;height:18px;line-height:18px;text-align:right;padding:0 4px 0 3px">625,00000</div>
<div class="t g" style="left:700px;top:372px;width:35px;height:18px;line-height:18px;text-align:center;padding:0 3px 0 3px">B</div>
<div class="t g" style="left:735px;top:372px;width:72px;height:18px;line-height:18px;text-align:right;padding:0 4px 0 3px">619,84988</div>
<div class="t g" style="left:807px;top:372px;width:35px;height:18px;line-height:18px;text-align:center;padding:0 3px 0 3px">B</div>
<div class="t g" style="left:842px;top:372px;width:71px;height:18px;line-height:18px;text-align:right;padding:0 4px 0 3px">0,00000</div>
<div class="t g" style="left:913px;top:372px;width:53px;height:18px;line-height:18px;text-align:right;padding:0 4px 0 3px">3,1000</div>
<div class="t g" style="left:966px;top:372px;width:54px;height:18px;line-height:18px;text-align:right;padding:0 4px 0 3px">0,0000</div>
<div class="cb" style="left:1029px;top:374px;height:14px;border-color:#cdcdcd;background:#fcfcfc"></div>
<div class="t g" style="left:1053px;top:372px;width:56px;height:18px;line-height:18px;text-align:right;padding:0 4px 0 3px">0,00</div>
<div class="t g" style="left:1109px;top:372px;width:51px;height:18px;line-height:18px;text-align:right;padding:0 4px 0 3px">0,00</div>
<div class="t g" style="left:1160px;top:372px;width:45px;height:18px;line-height:18px;text-align:right;padding:0 4px 0 3px">168,00</div>
<div class="t g" style="left:1205px;top:372px;width:54px;height:18px;line-height:18px;text-align:right;padding:0 4px 0 3px">100,00</div>
<div class="t g" style="left:1259px;top:372px;width:44px;height:18px;line-height:18px;text-align:right;padding:0 4px 0 3px">00003</div>
<div class="cb" style="left:1311px;top:374px;height:14px;border-color:#cdcdcd;background:#fcfcfc"></div>
<div class="t g" style="left:1334px;top:372px;width:72px;height:18px;line-height:18px;text-align:right;padding:0 4px 0 3px">118.255,00</div>
<div class="t g" style="left:1406px;top:372px;width:74px;height:18px;line-height:18px;text-align:right;padding:0 4px 0 3px">85.739,06</div>
<div class="t g" style="left:1480px;top:372px;width:74px;height:18px;line-height:18px;text-align:right;padding:0 4px 0 3px">857,39</div>
<div class="t g" style="left:1554px;top:372px;width:74px;height:18px;line-height:18px;text-align:right;padding:0 4px 0 3px">84.881,67</div>
<svg style="left:1633px;top:375px" width="13" height="11"><path d="M1 6l3.5 3.5L12 1" fill="none" stroke="#6f96d0" stroke-width="1.4"/></svg>
<div class="t g" style="left:1649px;top:372px;height:18px;line-height:18px;padding:0">Potvrđen</div>
<div class="b " style="left:233px;top:391px;width:1475px;height:19px;background:#f0f0f0"></div>
<div class="t g" style="left:233px;top:391px;width:47px;height:18px;line-height:18px;text-align:right;padding:0 4px 0 3px">000009</div>
<div class="t g" style="left:280px;top:391px;width:158px;height:18px;line-height:18px;text-align:left;padding:0 3px 0 3px;letter-spacing:-0.55px">POPOVIĆ DRAGAN</div>
<div class="t g" style="left:438px;top:391px;width:57px;height:18px;line-height:18px;text-align:right;padding:0 4px 0 3px">0,0000</div>
<div class="t g" style="left:495px;top:391px;width:35px;height:18px;line-height:18px;text-align:center;padding:0 3px 0 3px">B</div>
<div class="t g" style="left:530px;top:391px;width:170px;height:18px;line-height:18px;text-align:right;padding:0 4px 0 3px">437,50000</div>
<div class="t g" style="left:700px;top:391px;width:35px;height:18px;line-height:18px;text-align:center;padding:0 3px 0 3px">B</div>
<div class="t g" style="left:735px;top:391px;width:72px;height:18px;line-height:18px;text-align:right;padding:0 4px 0 3px">451,75202</div>
<div class="t g" style="left:807px;top:391px;width:35px;height:18px;line-height:18px;text-align:center;padding:0 3px 0 3px">B</div>
<div class="t g" style="left:842px;top:391px;width:71px;height:18px;line-height:18px;text-align:right;padding:0 4px 0 3px">0,00000</div>
<div class="t g" style="left:913px;top:391px;width:53px;height:18px;line-height:18px;text-align:right;padding:0 4px 0 3px">3,1000</div>
<div class="t g" style="left:966px;top:391px;width:54px;height:18px;line-height:18px;text-align:right;padding:0 4px 0 3px">0,0000</div>
<div class="cb" style="left:1029px;top:393px;height:14px;border-color:#cdcdcd;background:#fcfcfc"></div>
<div class="t g" style="left:1053px;top:391px;width:56px;height:18px;line-height:18px;text-align:right;padding:0 4px 0 3px">0,00</div>
<div class="t g" style="left:1109px;top:391px;width:51px;height:18px;line-height:18px;text-align:right;padding:0 4px 0 3px">0,00</div>
<div class="t g" style="left:1160px;top:391px;width:45px;height:18px;line-height:18px;text-align:right;padding:0 4px 0 3px">168,00</div>
<div class="t g" style="left:1205px;top:391px;width:54px;height:18px;line-height:18px;text-align:right;padding:0 4px 0 3px">100,00</div>
<div class="t g" style="left:1259px;top:391px;width:44px;height:18px;line-height:18px;text-align:right;padding:0 4px 0 3px">00003</div>
<div class="cb" style="left:1311px;top:393px;height:14px;border-color:#cdcdcd;background:#fcfcfc"></div>
<div class="t g" style="left:1334px;top:391px;width:72px;height:18px;line-height:18px;text-align:right;padding:0 4px 0 3px">85.778,50</div>
<div class="t g" style="left:1406px;top:391px;width:74px;height:18px;line-height:18px;text-align:right;padding:0 4px 0 3px">62.973,03</div>
<div class="t g" style="left:1480px;top:391px;width:74px;height:18px;line-height:18px;text-align:right;padding:0 4px 0 3px">5.089,88</div>
<div class="t g" style="left:1554px;top:391px;width:74px;height:18px;line-height:18px;text-align:right;padding:0 4px 0 3px">57.883,15</div>
<svg style="left:1633px;top:394px" width="13" height="11"><path d="M1 6l3.5 3.5L12 1" fill="none" stroke="#6f96d0" stroke-width="1.4"/></svg>
<div class="t g" style="left:1649px;top:391px;height:18px;line-height:18px;padding:0">Potvrđen</div>
<div class="b " style="left:233px;top:410px;width:1475px;height:19px;background:#fcfcfc"></div>
<div class="t g" style="left:233px;top:410px;width:47px;height:18px;line-height:18px;text-align:right;padding:0 4px 0 3px">000010</div>
<div class="t g" style="left:280px;top:410px;width:158px;height:18px;line-height:18px;text-align:left;padding:0 3px 0 3px;letter-spacing:-0.55px">PAVLOVIĆ IVAN</div>
<div class="t g" style="left:438px;top:410px;width:57px;height:18px;line-height:18px;text-align:right;padding:0 4px 0 3px">0,0000</div>
<div class="t g" style="left:495px;top:410px;width:35px;height:18px;line-height:18px;text-align:center;padding:0 3px 0 3px">B</div>
<div class="t g" style="left:530px;top:410px;width:170px;height:18px;line-height:18px;text-align:right;padding:0 4px 0 3px">625,00000</div>
<div class="t g" style="left:700px;top:410px;width:35px;height:18px;line-height:18px;text-align:center;padding:0 3px 0 3px">B</div>
<div class="t g" style="left:735px;top:410px;width:72px;height:18px;line-height:18px;text-align:right;padding:0 4px 0 3px">617,13250</div>
<div class="t g" style="left:807px;top:410px;width:35px;height:18px;line-height:18px;text-align:center;padding:0 3px 0 3px">B</div>
<div class="t g" style="left:842px;top:410px;width:71px;height:18px;line-height:18px;text-align:right;padding:0 4px 0 3px">0,00000</div>
<div class="t g" style="left:913px;top:410px;width:53px;height:18px;line-height:18px;text-align:right;padding:0 4px 0 3px">2,6000</div>
<div class="t g" style="left:966px;top:410px;width:54px;height:18px;line-height:18px;text-align:right;padding:0 4px 0 3px">0,0000</div>
<div class="cb" style="left:1029px;top:412px;height:14px;border-color:#cdcdcd;background:#fcfcfc"></div>
<div class="t g" style="left:1053px;top:410px;width:56px;height:18px;line-height:18px;text-align:right;padding:0 4px 0 3px">0,00</div>
<div class="t g" style="left:1109px;top:410px;width:51px;height:18px;line-height:18px;text-align:right;padding:0 4px 0 3px">0,00</div>
<div class="t g" style="left:1160px;top:410px;width:45px;height:18px;line-height:18px;text-align:right;padding:0 4px 0 3px">168,00</div>
<div class="t g" style="left:1205px;top:410px;width:54px;height:18px;line-height:18px;text-align:right;padding:0 4px 0 3px">100,00</div>
<div class="t g" style="left:1259px;top:410px;width:44px;height:18px;line-height:18px;text-align:right;padding:0 4px 0 3px">00005</div>
<div class="cb" style="left:1311px;top:412px;height:14px;border-color:#cdcdcd;background:#fcfcfc"></div>
<div class="t g" style="left:1334px;top:410px;width:72px;height:18px;line-height:18px;text-align:right;padding:0 4px 0 3px">117.730,00</div>
<div class="t g" style="left:1406px;top:410px;width:74px;height:18px;line-height:18px;text-align:right;padding:0 4px 0 3px">85.371,02</div>
<div class="t g" style="left:1480px;top:410px;width:74px;height:18px;line-height:18px;text-align:right;padding:0 4px 0 3px">853,71</div>
<div class="t g" style="left:1554px;top:410px;width:74px;height:18px;line-height:18px;text-align:right;padding:0 4px 0 3px">84.517,31</div>
<svg style="left:1633px;top:413px" width="13" height="11"><path d="M1 6l3.5 3.5L12 1" fill="none" stroke="#6f96d0" stroke-width="1.4"/></svg>
<div class="t g" style="left:1649px;top:410px;height:18px;line-height:18px;padding:0">Potvrđen</div>
<div class="b " style="left:233px;top:429px;width:1475px;height:19px;background:#f0f0f0"></div>
<div class="t g" style="left:233px;top:429px;width:47px;height:18px;line-height:18px;text-align:right;padding:0 4px 0 3px">000013</div>
<div class="t g" style="left:280px;top:429px;width:158px;height:18px;line-height:18px;text-align:left;padding:0 3px 0 3px;letter-spacing:-0.55px">JANKOVIĆ ALEKSANDAR</div>
<div class="t g" style="left:438px;top:429px;width:57px;height:18px;line-height:18px;text-align:right;padding:0 4px 0 3px">0,0000</div>
<div class="t g" style="left:495px;top:429px;width:35px;height:18px;line-height:18px;text-align:center;padding:0 3px 0 3px">B</div>
<div class="t g" style="left:530px;top:429px;width:170px;height:18px;line-height:18px;text-align:right;padding:0 4px 0 3px">375,00000</div>
<div class="t g" style="left:700px;top:429px;width:35px;height:18px;line-height:18px;text-align:center;padding:0 3px 0 3px">B</div>
<div class="t g" style="left:735px;top:429px;width:72px;height:18px;line-height:18px;text-align:right;padding:0 4px 0 3px">395,55643</div>
<div class="t g" style="left:807px;top:429px;width:35px;height:18px;line-height:18px;text-align:center;padding:0 3px 0 3px">B</div>
<div class="t g" style="left:842px;top:429px;width:71px;height:18px;line-height:18px;text-align:right;padding:0 4px 0 3px">0,00000</div>
<div class="t g" style="left:913px;top:429px;width:53px;height:18px;line-height:18px;text-align:right;padding:0 4px 0 3px">3,0500</div>
<div class="t g" style="left:966px;top:429px;width:54px;height:18px;line-height:18px;text-align:right;padding:0 4px 0 3px">0,0000</div>
<div class="cb" style="left:1029px;top:431px;height:14px;border-color:#cdcdcd;background:#fcfcfc"></div>
<div class="t g" style="left:1053px;top:429px;width:56px;height:18px;line-height:18px;text-align:right;padding:0 4px 0 3px">0,00</div>
<div class="t g" style="left:1109px;top:429px;width:51px;height:18px;line-height:18px;text-align:right;padding:0 4px 0 3px">0,00</div>
<div class="t g" style="left:1160px;top:429px;width:45px;height:18px;line-height:18px;text-align:right;padding:0 4px 0 3px">168,00</div>
<div class="t g" style="left:1205px;top:429px;width:54px;height:18px;line-height:18px;text-align:right;padding:0 4px 0 3px">100,00</div>
<div class="t g" style="left:1259px;top:429px;width:44px;height:18px;line-height:18px;text-align:right;padding:0 4px 0 3px">00006</div>
<div class="cb" style="left:1311px;top:431px;height:14px;border-color:#cdcdcd;background:#fcfcfc"></div>
<div class="t g" style="left:1334px;top:429px;width:72px;height:18px;line-height:18px;text-align:right;padding:0 4px 0 3px">74.921,50</div>
<div class="t g" style="left:1406px;top:429px;width:74px;height:18px;line-height:18px;text-align:right;padding:0 4px 0 3px">55.362,27</div>
<div class="t g" style="left:1480px;top:429px;width:74px;height:18px;line-height:18px;text-align:right;padding:0 4px 0 3px">27.220,29</div>
<div class="t g" style="left:1554px;top:429px;width:74px;height:18px;line-height:18px;text-align:right;padding:0 4px 0 3px">28.141,98</div>
<svg style="left:1633px;top:432px" width="13" height="11"><path d="M1 6l3.5 3.5L12 1" fill="none" stroke="#6f96d0" stroke-width="1.4"/></svg>
<div class="t g" style="left:1649px;top:429px;height:18px;line-height:18px;padding:0">Potvrđen</div>
<div class="b " style="left:233px;top:448px;width:1475px;height:19px;background:#fcfcfc"></div>
<div class="t g" style="left:233px;top:448px;width:47px;height:18px;line-height:18px;text-align:right;padding:0 4px 0 3px">000015</div>
<div class="t g" style="left:280px;top:448px;width:158px;height:18px;line-height:18px;text-align:left;padding:0 3px 0 3px;letter-spacing:-0.55px">ĐORĐEVIĆ MARKO</div>
<div class="t g" style="left:438px;top:448px;width:57px;height:18px;line-height:18px;text-align:right;padding:0 4px 0 3px">0,0000</div>
<div class="t g" style="left:495px;top:448px;width:35px;height:18px;line-height:18px;text-align:center;padding:0 3px 0 3px">B</div>
<div class="t g" style="left:530px;top:448px;width:170px;height:18px;line-height:18px;text-align:right;padding:0 4px 0 3px">375,00000</div>
<div class="t g" style="left:700px;top:448px;width:35px;height:18px;line-height:18px;text-align:center;padding:0 3px 0 3px">B</div>
<div class="t g" style="left:735px;top:448px;width:72px;height:18px;line-height:18px;text-align:right;padding:0 4px 0 3px">0,00000</div>
<div class="t g" style="left:807px;top:448px;width:35px;height:18px;line-height:18px;text-align:center;padding:0 3px 0 3px">B</div>
<div class="t g" style="left:842px;top:448px;width:71px;height:18px;line-height:18px;text-align:right;padding:0 4px 0 3px">0,00000</div>
<div class="t g" style="left:913px;top:448px;width:53px;height:18px;line-height:18px;text-align:right;padding:0 4px 0 3px">3,0500</div>
<div class="t g" style="left:966px;top:448px;width:54px;height:18px;line-height:18px;text-align:right;padding:0 4px 0 3px">0,0000</div>
<div class="cb" style="left:1029px;top:450px;height:14px;border-color:#cdcdcd;background:#fcfcfc"></div>
<div class="t g" style="left:1053px;top:448px;width:56px;height:18px;line-height:18px;text-align:right;padding:0 4px 0 3px">0,00</div>
<div class="t g" style="left:1109px;top:448px;width:51px;height:18px;line-height:18px;text-align:right;padding:0 4px 0 3px">0,00</div>
<div class="t g" style="left:1160px;top:448px;width:45px;height:18px;line-height:18px;text-align:right;padding:0 4px 0 3px">0,00</div>
<div class="t g" style="left:1205px;top:448px;width:54px;height:18px;line-height:18px;text-align:right;padding:0 4px 0 3px">100,00</div>
<div class="t g" style="left:1259px;top:448px;width:44px;height:18px;line-height:18px;text-align:right;padding:0 4px 0 3px">00006</div>
<div class="cb" style="left:1311px;top:450px;height:14px;border-color:#cdcdcd;background:#fcfcfc"></div>
<div class="t g" style="left:1334px;top:448px;width:72px;height:18px;line-height:18px;text-align:right;padding:0 4px 0 3px">0,00</div>
<div class="t g" style="left:1406px;top:448px;width:74px;height:18px;line-height:18px;text-align:right;padding:0 4px 0 3px">0,00</div>
<div class="t g" style="left:1480px;top:448px;width:74px;height:18px;line-height:18px;text-align:right;padding:0 4px 0 3px">0,00</div>
<div class="t g" style="left:1554px;top:448px;width:74px;height:18px;line-height:18px;text-align:right;padding:0 4px 0 3px">0,00</div>
<div class="t g" style="left:1628px;top:448px;width:80px;height:18px;line-height:18px;text-align:center;padding:0 3px 0 3px">U obradi</div>
<div class="b " style="left:233px;top:467px;width:1475px;height:19px;background:#f0f0f0"></div>
<div class="t g" style="left:233px;top:467px;width:47px;height:18px;line-height:18px;text-align:right;padding:0 4px 0 3px">000016</div>
<div class="t g" style="left:280px;top:467px;width:158px;height:18px;line-height:18px;text-align:left;padding:0 3px 0 3px;letter-spacing:-0.55px">MILOSAVLJEVIĆ NIKOLA</div>
<div class="t g" style="left:438px;top:467px;width:57px;height:18px;line-height:18px;text-align:right;padding:0 4px 0 3px">0,0000</div>
<div class="t g" style="left:495px;top:467px;width:35px;height:18px;line-height:18px;text-align:center;padding:0 3px 0 3px">B</div>
<div class="t g" style="left:530px;top:467px;width:170px;height:18px;line-height:18px;text-align:right;padding:0 4px 0 3px">375,00000</div>
<div class="t g" style="left:700px;top:467px;width:35px;height:18px;line-height:18px;text-align:center;padding:0 3px 0 3px">B</div>
<div class="t g" style="left:735px;top:467px;width:72px;height:18px;line-height:18px;text-align:right;padding:0 4px 0 3px">395,55643</div>
<div class="t g" style="left:807px;top:467px;width:35px;height:18px;line-height:18px;text-align:center;padding:0 3px 0 3px">B</div>
<div class="t g" style="left:842px;top:467px;width:71px;height:18px;line-height:18px;text-align:right;padding:0 4px 0 3px">0,00000</div>
<div class="t g" style="left:913px;top:467px;width:53px;height:18px;line-height:18px;text-align:right;padding:0 4px 0 3px">3,0500</div>
<div class="t g" style="left:966px;top:467px;width:54px;height:18px;line-height:18px;text-align:right;padding:0 4px 0 3px">0,0000</div>
<div class="cb" style="left:1029px;top:469px;height:14px;border-color:#cdcdcd;background:#fcfcfc"></div>
<div class="t g" style="left:1053px;top:467px;width:56px;height:18px;line-height:18px;text-align:right;padding:0 4px 0 3px">0,00</div>
<div class="t g" style="left:1109px;top:467px;width:51px;height:18px;line-height:18px;text-align:right;padding:0 4px 0 3px">0,00</div>
<div class="t g" style="left:1160px;top:467px;width:45px;height:18px;line-height:18px;text-align:right;padding:0 4px 0 3px">168,00</div>
<div class="t g" style="left:1205px;top:467px;width:54px;height:18px;line-height:18px;text-align:right;padding:0 4px 0 3px">100,00</div>
<div class="t g" style="left:1259px;top:467px;width:44px;height:18px;line-height:18px;text-align:right;padding:0 4px 0 3px">00006</div>
<div class="cb" style="left:1311px;top:469px;height:14px;border-color:#cdcdcd;background:#fcfcfc"></div>
<div class="t g" style="left:1334px;top:467px;width:72px;height:18px;line-height:18px;text-align:right;padding:0 4px 0 3px">74.921,50</div>
<div class="t g" style="left:1406px;top:467px;width:74px;height:18px;line-height:18px;text-align:right;padding:0 4px 0 3px">55.362,27</div>
<div class="t g" style="left:1480px;top:467px;width:74px;height:18px;line-height:18px;text-align:right;padding:0 4px 0 3px">0,00</div>
<div class="t g" style="left:1554px;top:467px;width:74px;height:18px;line-height:18px;text-align:right;padding:0 4px 0 3px">55.362,27</div>
<svg style="left:1633px;top:470px" width="13" height="11"><path d="M1 6l3.5 3.5L12 1" fill="none" stroke="#6f96d0" stroke-width="1.4"/></svg>
<div class="t g" style="left:1649px;top:467px;height:18px;line-height:18px;padding:0">Potvrđen</div>
<div class="b " style="left:233px;top:486px;width:1475px;height:19px;background:#fcfcfc"></div>
<div class="t g" style="left:233px;top:486px;width:47px;height:18px;line-height:18px;text-align:right;padding:0 4px 0 3px">000018</div>
<div class="t g" style="left:280px;top:486px;width:158px;height:18px;line-height:18px;text-align:left;padding:0 3px 0 3px;letter-spacing:-0.55px">STEVANOVIĆ VERA</div>
<div class="t g" style="left:438px;top:486px;width:57px;height:18px;line-height:18px;text-align:right;padding:0 4px 0 3px">0,0000</div>
<div class="t g" style="left:495px;top:486px;width:35px;height:18px;line-height:18px;text-align:center;padding:0 3px 0 3px">B</div>
<div class="t g" style="left:530px;top:486px;width:170px;height:18px;line-height:18px;text-align:right;padding:0 4px 0 3px">375,00000</div>
<div class="t g" style="left:700px;top:486px;width:35px;height:18px;line-height:18px;text-align:center;padding:0 3px 0 3px">B</div>
<div class="t g" style="left:735px;top:486px;width:72px;height:18px;line-height:18px;text-align:right;padding:0 4px 0 3px">395,55643</div>
<div class="t g" style="left:807px;top:486px;width:35px;height:18px;line-height:18px;text-align:center;padding:0 3px 0 3px">B</div>
<div class="t g" style="left:842px;top:486px;width:71px;height:18px;line-height:18px;text-align:right;padding:0 4px 0 3px">0,00000</div>
<div class="t g" style="left:913px;top:486px;width:53px;height:18px;line-height:18px;text-align:right;padding:0 4px 0 3px">3,0500</div>
<div class="t g" style="left:966px;top:486px;width:54px;height:18px;line-height:18px;text-align:right;padding:0 4px 0 3px">0,0000</div>
<div class="cb" style="left:1029px;top:488px;height:14px;border-color:#cdcdcd;background:#fcfcfc"></div>
<div class="t g" style="left:1053px;top:486px;width:56px;height:18px;line-height:18px;text-align:right;padding:0 4px 0 3px">0,00</div>
<div class="t g" style="left:1109px;top:486px;width:51px;height:18px;line-height:18px;text-align:right;padding:0 4px 0 3px">0,00</div>
<div class="t g" style="left:1160px;top:486px;width:45px;height:18px;line-height:18px;text-align:right;padding:0 4px 0 3px">168,00</div>
<div class="t g" style="left:1205px;top:486px;width:54px;height:18px;line-height:18px;text-align:right;padding:0 4px 0 3px">100,00</div>
<div class="t g" style="left:1259px;top:486px;width:44px;height:18px;line-height:18px;text-align:right;padding:0 4px 0 3px">00006</div>
<div class="cb" style="left:1311px;top:488px;height:14px;border-color:#cdcdcd;background:#fcfcfc"></div>
<div class="t g" style="left:1334px;top:486px;width:72px;height:18px;line-height:18px;text-align:right;padding:0 4px 0 3px">74.921,50</div>
<div class="t g" style="left:1406px;top:486px;width:74px;height:18px;line-height:18px;text-align:right;padding:0 4px 0 3px">55.362,27</div>
<div class="t g" style="left:1480px;top:486px;width:74px;height:18px;line-height:18px;text-align:right;padding:0 4px 0 3px">553,62</div>
<div class="t g" style="left:1554px;top:486px;width:74px;height:18px;line-height:18px;text-align:right;padding:0 4px 0 3px">54.808,65</div>
<svg style="left:1633px;top:489px" width="13" height="11"><path d="M1 6l3.5 3.5L12 1" fill="none" stroke="#6f96d0" stroke-width="1.4"/></svg>
<div class="t g" style="left:1649px;top:486px;height:18px;line-height:18px;padding:0">Potvrđen</div>
<div class="b " style="left:233px;top:505px;width:1475px;height:19px;background:#f0f0f0"></div>
<div class="t g" style="left:233px;top:505px;width:47px;height:18px;line-height:18px;text-align:right;padding:0 4px 0 3px">000020</div>
<div class="t g" style="left:280px;top:505px;width:158px;height:18px;line-height:18px;text-align:left;padding:0 3px 0 3px;letter-spacing:-0.55px">RISTIĆ ZORAN</div>
<div class="t g" style="left:438px;top:505px;width:57px;height:18px;line-height:18px;text-align:right;padding:0 4px 0 3px">0,0000</div>
<div class="t g" style="left:495px;top:505px;width:35px;height:18px;line-height:18px;text-align:center;padding:0 3px 0 3px">B</div>
<div class="t g" style="left:530px;top:505px;width:170px;height:18px;line-height:18px;text-align:right;padding:0 4px 0 3px">375,00000</div>
<div class="t g" style="left:700px;top:505px;width:35px;height:18px;line-height:18px;text-align:center;padding:0 3px 0 3px">B</div>
<div class="t g" style="left:735px;top:505px;width:72px;height:18px;line-height:18px;text-align:right;padding:0 4px 0 3px">395,55643</div>
<div class="t g" style="left:807px;top:505px;width:35px;height:18px;line-height:18px;text-align:center;padding:0 3px 0 3px">B</div>
<div class="t g" style="left:842px;top:505px;width:71px;height:18px;line-height:18px;text-align:right;padding:0 4px 0 3px">0,00000</div>
<div class="t g" style="left:913px;top:505px;width:53px;height:18px;line-height:18px;text-align:right;padding:0 4px 0 3px">3,0500</div>
<div class="t g" style="left:966px;top:505px;width:54px;height:18px;line-height:18px;text-align:right;padding:0 4px 0 3px">0,0000</div>
<div class="cb" style="left:1029px;top:507px;height:14px;border-color:#cdcdcd;background:#fcfcfc"></div>
<div class="t g" style="left:1053px;top:505px;width:56px;height:18px;line-height:18px;text-align:right;padding:0 4px 0 3px">0,00</div>
<div class="t g" style="left:1109px;top:505px;width:51px;height:18px;line-height:18px;text-align:right;padding:0 4px 0 3px">0,00</div>
<div class="t g" style="left:1160px;top:505px;width:45px;height:18px;line-height:18px;text-align:right;padding:0 4px 0 3px">168,00</div>
<div class="t g" style="left:1205px;top:505px;width:54px;height:18px;line-height:18px;text-align:right;padding:0 4px 0 3px">100,00</div>
<div class="t g" style="left:1259px;top:505px;width:44px;height:18px;line-height:18px;text-align:right;padding:0 4px 0 3px">00005</div>
<div class="cb" style="left:1311px;top:507px;height:14px;border-color:#cdcdcd;background:#fcfcfc"></div>
<div class="t g" style="left:1334px;top:505px;width:72px;height:18px;line-height:18px;text-align:right;padding:0 4px 0 3px">74.921,50</div>
<div class="t g" style="left:1406px;top:505px;width:74px;height:18px;line-height:18px;text-align:right;padding:0 4px 0 3px">55.362,27</div>
<div class="t g" style="left:1480px;top:505px;width:74px;height:18px;line-height:18px;text-align:right;padding:0 4px 0 3px">0,00</div>
<div class="t g" style="left:1554px;top:505px;width:74px;height:18px;line-height:18px;text-align:right;padding:0 4px 0 3px">55.362,27</div>
<svg style="left:1633px;top:508px" width="13" height="11"><path d="M1 6l3.5 3.5L12 1" fill="none" stroke="#6f96d0" stroke-width="1.4"/></svg>
<div class="t g" style="left:1649px;top:505px;height:18px;line-height:18px;padding:0">Potvrđen</div>
<div class="b " style="left:233px;top:524px;width:1475px;height:19px;background:#e3e3e3"></div>
<div class="t g" style="left:233px;top:524px;width:47px;height:18px;line-height:18px;text-align:right;padding:0 4px 0 3px">000025</div>
<div class="t g" style="left:280px;top:524px;width:158px;height:18px;line-height:18px;text-align:left;padding:0 3px 0 3px;letter-spacing:-0.55px">ĐURIĆ MILAN</div>
<div class="t g" style="left:438px;top:524px;width:57px;height:18px;line-height:18px;text-align:right;padding:0 4px 0 3px">0,0000</div>
<div class="t g" style="left:495px;top:524px;width:35px;height:18px;line-height:18px;text-align:center;padding:0 3px 0 3px">B</div>
<div class="b " style="left:530px;top:524px;width:170px;height:19px;background:#ffffff"></div>
<div class="t g" style="left:530px;top:524px;width:170px;height:18px;line-height:18px;text-align:right;padding:0 4px 0 3px">500,00000</div>
<div class="t g" style="left:700px;top:524px;width:35px;height:18px;line-height:18px;text-align:center;padding:0 3px 0 3px">B</div>
<div class="t g" style="left:735px;top:524px;width:72px;height:18px;line-height:18px;text-align:right;padding:0 4px 0 3px">507,56732</div>
<div class="t g" style="left:807px;top:524px;width:35px;height:18px;line-height:18px;text-align:center;padding:0 3px 0 3px">B</div>
<div class="t g" style="left:842px;top:524px;width:71px;height:18px;line-height:18px;text-align:right;padding:0 4px 0 3px">0,00000</div>
<div class="t g" style="left:913px;top:524px;width:53px;height:18px;line-height:18px;text-align:right;padding:0 4px 0 3px">3,0500</div>
<div class="t g" style="left:966px;top:524px;width:54px;height:18px;line-height:18px;text-align:right;padding:0 4px 0 3px">0,0000</div>
<div class="cb" style="left:1029px;top:526px;height:14px;border-color:#cdcdcd;background:#fcfcfc"></div>
<div class="t g" style="left:1053px;top:524px;width:56px;height:18px;line-height:18px;text-align:right;padding:0 4px 0 3px">0,00</div>
<div class="t g" style="left:1109px;top:524px;width:51px;height:18px;line-height:18px;text-align:right;padding:0 4px 0 3px">0,00</div>
<div class="t g" style="left:1160px;top:524px;width:45px;height:18px;line-height:18px;text-align:right;padding:0 4px 0 3px">168,00</div>
<div class="t g" style="left:1205px;top:524px;width:54px;height:18px;line-height:18px;text-align:right;padding:0 4px 0 3px">100,00</div>
<div class="t g" style="left:1259px;top:524px;width:44px;height:18px;line-height:18px;text-align:right;padding:0 4px 0 3px">00005</div>
<div class="cb" style="left:1311px;top:526px;height:14px;border-color:#cdcdcd;background:#fcfcfc"></div>
<div class="t g" style="left:1334px;top:524px;width:72px;height:18px;line-height:18px;text-align:right;padding:0 4px 0 3px">96.562,00</div>
<div class="t g" style="left:1406px;top:524px;width:74px;height:18px;line-height:18px;text-align:right;padding:0 4px 0 3px">70.532,26</div>
<div class="t g" style="left:1480px;top:524px;width:74px;height:18px;line-height:18px;text-align:right;padding:0 4px 0 3px">705,32</div>
<div class="t g" style="left:1554px;top:524px;width:74px;height:18px;line-height:18px;text-align:right;padding:0 4px 0 3px">69.826,94</div>
<svg style="left:1633px;top:527px" width="13" height="11"><path d="M1 6l3.5 3.5L12 1" fill="none" stroke="#6f96d0" stroke-width="1.4"/></svg>
<div class="t g" style="left:1649px;top:524px;height:18px;line-height:18px;padding:0">Potvrđen</div>
<div class="b" style="left:280px;top:335px;width:1px;height:208px;background:#a9a9a9"></div>
<div class="b" style="left:438px;top:335px;width:1px;height:208px;background:#a9a9a9"></div>
<div class="b" style="left:495px;top:335px;width:1px;height:208px;background:#a9a9a9"></div>
<div class="b" style="left:530px;top:335px;width:1px;height:208px;background:#a9a9a9"></div>
<div class="b" style="left:700px;top:335px;width:1px;height:208px;background:#a9a9a9"></div>
<div class="b" style="left:735px;top:335px;width:1px;height:208px;background:#a9a9a9"></div>
<div class="b" style="left:807px;top:335px;width:1px;height:208px;background:#a9a9a9"></div>
<div class="b" style="left:842px;top:335px;width:1px;height:208px;background:#a9a9a9"></div>
<div class="b" style="left:913px;top:335px;width:1px;height:208px;background:#a9a9a9"></div>
<div class="b" style="left:966px;top:335px;width:1px;height:208px;background:#a9a9a9"></div>
<div class="b" style="left:1020px;top:335px;width:1px;height:208px;background:#a9a9a9"></div>
<div class="b" style="left:1053px;top:335px;width:1px;height:208px;background:#a9a9a9"></div>
<div class="b" style="left:1109px;top:335px;width:1px;height:208px;background:#a9a9a9"></div>
<div class="b" style="left:1160px;top:335px;width:1px;height:208px;background:#a9a9a9"></div>
<div class="b" style="left:1205px;top:335px;width:1px;height:208px;background:#a9a9a9"></div>
<div class="b" style="left:1259px;top:335px;width:1px;height:208px;background:#a9a9a9"></div>
<div class="b" style="left:1303px;top:335px;width:1px;height:208px;background:#a9a9a9"></div>
<div class="b" style="left:1334px;top:335px;width:1px;height:208px;background:#a9a9a9"></div>
<div class="b" style="left:1406px;top:335px;width:1px;height:208px;background:#a9a9a9"></div>
<div class="b" style="left:1480px;top:335px;width:1px;height:208px;background:#a9a9a9"></div>
<div class="b" style="left:1554px;top:335px;width:1px;height:208px;background:#a9a9a9"></div>
<div class="b" style="left:1628px;top:335px;width:1px;height:208px;background:#a9a9a9"></div>
<div class="b" style="left:233px;top:352px;width:1475px;height:1px;background:#a9a9a9"></div>
<div class="b" style="left:233px;top:371px;width:1475px;height:1px;background:#a9a9a9"></div>
<div class="b" style="left:233px;top:390px;width:1475px;height:1px;background:#a9a9a9"></div>
<div class="b" style="left:233px;top:409px;width:1475px;height:1px;background:#a9a9a9"></div>
<div class="b" style="left:233px;top:428px;width:1475px;height:1px;background:#a9a9a9"></div>
<div class="b" style="left:233px;top:447px;width:1475px;height:1px;background:#a9a9a9"></div>
<div class="b" style="left:233px;top:466px;width:1475px;height:1px;background:#a9a9a9"></div>
<div class="b" style="left:233px;top:485px;width:1475px;height:1px;background:#a9a9a9"></div>
<div class="b" style="left:233px;top:504px;width:1475px;height:1px;background:#a9a9a9"></div>
<div class="b" style="left:233px;top:523px;width:1475px;height:1px;background:#a9a9a9"></div>
<div class="b" style="left:233px;top:542px;width:1475px;height:1px;background:#a9a9a9"></div>
<div class="b " style="left:232px;top:702px;width:1478px;height:1px;background:#e6e6e6"></div>
<div class="b" style="left:1336px;top:705px;width:70px;height:20px;background:#fff;border:1px solid #e3e3e3;border-radius:3px"></div>
<div class="t g" style="left:1336px;top:705px;width:70px;height:20px;line-height:20px;text-align:right;padding-right:5px">854.011,50</div>
<div class="b" style="left:1408px;top:705px;width:72px;height:20px;background:#fff;border:1px solid #e3e3e3;border-radius:3px"></div>
<div class="t g" style="left:1408px;top:705px;width:72px;height:20px;line-height:20px;text-align:right;padding-right:5px">629.424,45</div>
<div class="b" style="left:1481px;top:705px;width:73px;height:20px;background:#fff;border:1px solid #e3e3e3;border-radius:3px"></div>
<div class="t g" style="left:1481px;top:705px;width:73px;height:20px;line-height:20px;text-align:right;padding-right:5px">35.280,21</div>
<div class="b" style="left:1556px;top:705px;width:72px;height:20px;background:#fff;border:1px solid #e3e3e3;border-radius:3px"></div>
<div class="t g" style="left:1556px;top:705px;width:72px;height:20px;line-height:20px;text-align:right;padding-right:5px">594.144,24</div>
<div class="b " style="left:233px;top:726px;width:1476px;height:19px;background:#f7f7f7"></div>
<svg style="left:238px;top:727px" width="400" height="16"><path d="M1.5 3v10" stroke="#666" stroke-width="1"/><path d="M8 3.5L4 8l4 4.5M12 3.5L8 8l4 4.5" fill="none" stroke="#666" stroke-width="1"/><path d="M30 3.5L26 8l4 4.5M34 3.5L30 8l4 4.5" fill="none" stroke="#666" stroke-width="1"/><path d="M56 3.5L52 8l4 4.5" fill="none" stroke="#666" stroke-width="1"/></svg>
<div class="t" style="left:312px;top:728px;font-size:13px">10 od 10</div>
<svg style="left:378px;top:727px" width="300" height="16"><path d="M2 3.5L6 8l-4 4.5" fill="none" stroke="#666"/><path d="M23.5 3.5L27.5 8l-4 4.5M27.5 3.5L31.5 8l-4 4.5" fill="none" stroke="#666"/><path d="M48 3.5L52 8l-4 4.5M52 3.5L56 8l-4 4.5M57.5 3v10" fill="none" stroke="#666"/><path d="M75.5 4v8M71.5 8h8" stroke="#1a8a6e" stroke-width="1.9"/><path d="M95.5 8h8" stroke="#777" stroke-width="1.9"/><path d="M119 13l1-4 6-6 3 3-6 6zM124 5l3 3" fill="none" stroke="#333" stroke-width="1.2"/><path d="M142.5 8.5l3 3 6-6" fill="none" stroke="#999" stroke-width="1.1"/><path d="M168 4l8 8M176 4l-8 8" stroke="#777" stroke-width="1.1"/><path d="M190.5 11.5v-1.5q0-4 4-4h5.5M197 3l3 3-3 3" fill="none" stroke="#333" stroke-width="1.3"/><path d="M219 3v10M214.5 5.5l9 5M214.5 10.5l9-5" stroke="#222" stroke-width="1.3"/><path d="M242 3.5v10M237.5 6l9 5M237.5 11l9-5" stroke="#888" stroke-width="1.1"/><path d="M233 1v4l1.2-1 1.3 2" fill="none" stroke="#555" stroke-width=".9"/><path d="M261.5 3.5h13l-5 5.5v5l-3 1.5v-6.5z" fill="none" stroke="#222" stroke-width="1.2"/></svg>
<div class="b " style="left:672px;top:728px;width:1035px;height:14px;background:#f0f0f0"></div>
<svg style="left:676px;top:731px" width="1027" height="9"><path d="M0 4.5L6 1v7z" fill="#a6a6a6"/><path d="M1027 4.5L1021 1v7z" fill="#a6a6a6"/></svg>
<div class="b " style="left:685px;top:731px;width:872px;height:8px;background:#a3a3a3;border-radius:4px"></div>
<div class="b " style="left:233px;top:745px;width:1476px;height:61px;background:#f3f3f3"></div>
<div class="b " style="left:233px;top:745px;width:1476px;height:1px;background:#e3e3e3"></div>
<div class="cbon" style="left:236px;top:752px;width:16px;height:16px"></div>
<svg style="left:238px;top:755px" width="12" height="10"><path d="M1.5 5l3 3 6-6.5" fill="none" stroke="#fff" stroke-width="1.4"/></svg>
<div class="t " style="left:257px;top:753px;font-size:12px">Svi statusi</div>
<div class="sep" style="left:315px;top:749px;height:22px"></div>
<div class="b " style="left:319px;top:749px;width:117px;height:22px;background:#fafafa;border:1px solid #dedede;border-bottom-color:#9a9a9a;border-radius:3px"></div>
<div class="sep" style="left:439px;top:749px;height:22px"></div>
<div class="b" style="left:445px;top:752px;width:16px;height:16px;border-radius:8px;background:#2b579a"></div>
<div class="b" style="left:450px;top:757px;width:6px;height:6px;border-radius:3px;background:#fff"></div>
<div class="t " style="left:466px;top:753px;font-size:12px">Bruto/Č</div>
<div class="sep" style="left:513px;top:749px;height:22px"></div>
<div class="b" style="left:520px;top:752px;width:16px;height:16px;border-radius:8px;background:#fff;border:1px solid #d0d0d0"></div>
<div class="t " style="left:541px;top:753px;font-size:12px">Neto/Č</div>
<div class="sep" style="left:586px;top:749px;height:22px"></div>
<div class="btn" style="left:591px;top:749px;width:71px;height:23px;line-height:21px">Dat.valute</div>
<div class="sep" style="left:665px;top:749px;height:22px"></div>
<div class="btn" style="left:668px;top:749px;width:72px;height:23px;line-height:21px">Cena rada</div>
<div class="sep" style="left:743px;top:749px;height:22px"></div>
<div class="b " style="left:747px;top:749px;width:95px;height:23px;background:#fff;border:2px solid #2b579a;border-radius:3px"></div>
<div class="b" style="left:830px;top:751px;width:1px;height:19px;background:#e3e3e3"></div>
<div class="t " style="left:752px;top:754px;font-size:12px;letter-spacing:-0.4px">OBRADI SVE</div>
<svg style="left:832px;top:758px" width="10" height="6"><path d="M1 1l4 4 4-4" fill="none" stroke="#444" stroke-width="1.1"/></svg>
<div class="btn" style="left:848px;top:749px;width:76px;height:23px;line-height:21px">OBRIŠI SVE</div>
<div class="sep" style="left:927px;top:749px;height:22px"></div>
<div class="btn" style="left:931px;top:749px;width:76px;height:23px;line-height:21px">Min.zarada</div>
<div class="sep" style="left:1010px;top:749px;height:22px"></div>
<div class="t " style="left:1013px;top:754px;font-size:12px">Broj radnika: 10 od 10</div>
<div class="sep" style="left:1604px;top:749px;height:24px"></div>
<div class="t " style="left:1632px;top:753px;font-size:12px">Potvrđen</div>
<div class="sep" style="left:1707px;top:749px;height:24px"></div>
<div class="btn" style="left:237px;top:778px;width:116px;height:24px;line-height:22px">F5 - Novo zaglavlje</div>
<div class="sep" style="left:355px;top:778px;height:24px"></div>
<div class="btn" style="left:360px;top:778px;width:106px;height:24px;line-height:22px">F8 - Obrač.i potv.</div>
<div class="sep" style="left:468px;top:778px;height:24px"></div>
<div class="btn d" style="left:472px;top:778px;width:107px;height:24px;line-height:22px">Porezi i doprinosi</div>
<div class="sep" style="left:582px;top:778px;height:24px"></div>
<div class="btn d" style="left:585px;top:778px;width:67px;height:24px;line-height:22px">Obustave</div>
<div class="sep" style="left:655px;top:778px;height:24px"></div>
<div class="btn d" style="left:658px;top:778px;width:67px;height:24px;line-height:22px">Krediti</div>
<div class="sep" style="left:728px;top:778px;height:24px"></div>
<div class="sep" style="left:1418px;top:778px;height:24px"></div>
<div class="btn d" style="left:1422px;top:778px;width:77px;height:24px;line-height:22px">Potvrdi</div>
<div class="sep" style="left:1501px;top:778px;height:24px"></div>
<div class="btn" style="left:1505px;top:778px;width:97px;height:24px;line-height:22px">Vrati zaglavlje</div>
<div class="sep" style="left:1604px;top:778px;height:24px"></div>
<div class="btn d" style="left:1608px;top:778px;width:97px;height:24px;line-height:22px">Obriši zaglavlje</div>
<div class="sep" style="left:1707px;top:778px;height:24px"></div>
<div class="b " style="left:233px;top:806px;width:1170px;height:19px;background:#ebebeb"></div>
<div class="t g" style="left:233px;top:806px;width:32px;height:19px;line-height:19px;font-size:11.5px;padding:0 3px 0 4px">RBR</div>
<div class="t g" style="left:265px;top:806px;width:45px;height:19px;line-height:19px;font-size:11.5px;padding:0 3px 0 4px">Šifra</div>
<div class="t g" style="left:310px;top:806px;width:228px;height:19px;line-height:19px;font-size:11.5px;padding:0 3px 0 4px">Opis vrste plaćanja</div>
<div class="t g" style="left:538px;top:806px;width:35px;height:19px;line-height:19px;font-size:11.5px;padding:0 3px 0 4px">B/N</div>
<div class="t g" style="left:573px;top:806px;width:32px;height:19px;line-height:19px;font-size:11.5px;padding:0 3px 0 4px">Or...</div>
<div class="t g" style="left:605px;top:806px;width:38px;height:19px;line-height:19px;font-size:11.5px;padding:0 3px 0 4px">Opš...</div>
<div class="t g" style="left:643px;top:806px;width:42px;height:19px;line-height:19px;font-size:11.5px;padding:0 3px 0 4px">Opš...</div>
<div class="t g" style="left:685px;top:806px;width:50px;height:19px;line-height:19px;font-size:11.5px;padding:0 3px 0 4px">Mesto...</div>
<div class="t g" style="left:735px;top:806px;width:52px;height:19px;line-height:19px;font-size:11.5px;padding:0 3px 0 4px">N...</div>
<div class="t g" style="left:787px;top:806px;width:64px;height:19px;line-height:19px;font-size:11.5px;padding:0 3px 0 4px">Časova</div>
<div class="t g" style="left:851px;top:806px;width:74px;height:19px;line-height:19px;font-size:11.5px;padding:0 3px 0 4px">Satnina</div>
<div class="t g" style="left:925px;top:806px;width:70px;height:19px;line-height:19px;font-size:11.5px;padding:0 3px 0 4px">Osn.Bruto</div>
<div class="t g" style="left:995px;top:806px;width:76px;height:19px;line-height:19px;font-size:11.5px;padding:0 3px 0 4px">Osn.Neto</div>
<div class="t g" style="left:1071px;top:806px;width:64px;height:19px;line-height:19px;font-size:11.5px;padding:0 3px 0 4px">% Stimu...</div>
<div class="t g" style="left:1135px;top:806px;width:80px;height:19px;line-height:19px;font-size:11.5px;padding:0 3px 0 4px">Svega Neto</div>
<div class="t g" style="left:1215px;top:806px;width:112px;height:19px;line-height:19px;font-size:11.5px;padding:0 3px 0 4px">Vreme izmene</div>
<div class="t g" style="left:1327px;top:806px;width:76px;height:19px;line-height:19px;font-size:11.5px;padding:0 3px 0 4px">Operater</div>
<div class="b " style="left:233px;top:826px;width:1170px;height:19px;background:#f0f0f0"></div>
<div class="t g" style="left:233px;top:826px;width:32px;height:18px;line-height:18px;text-align:right;padding:0 4px 0 3px">1</div>
<div class="t g" style="left:265px;top:826px;width:45px;height:18px;line-height:18px;text-align:right;padding:0 4px 0 3px">100</div>
<div class="t g" style="left:310px;top:826px;width:228px;height:18px;line-height:18px;text-align:left;padding:0 3px 0 3px;letter-spacing:-0.55px">REDOVAN RAD</div>
<div class="t g" style="left:538px;top:826px;width:35px;height:18px;line-height:18px;text-align:center;padding:0 3px 0 3px">B</div>
<div class="t g" style="left:573px;top:826px;width:32px;height:18px;line-height:18px;text-align:right;padding:0 4px 0 3px">21</div>
<div class="t g" style="left:605px;top:826px;width:38px;height:18px;line-height:18px;text-align:right;padding:0 4px 0 3px">049</div>
<div class="t g" style="left:643px;top:826px;width:42px;height:18px;line-height:18px;text-align:right;padding:0 4px 0 3px">049</div>
<div class="t g" style="left:787px;top:826px;width:64px;height:18px;line-height:18px;text-align:right;padding:0 4px 0 3px">168,00</div>
<div class="t g" style="left:851px;top:826px;width:74px;height:18px;line-height:18px;text-align:right;padding:0 4px 0 3px">500,00000</div>
<div class="t g" style="left:925px;top:826px;width:70px;height:18px;line-height:18px;text-align:right;padding:0 4px 0 3px">84.000,00</div>
<div class="t g" style="left:995px;top:826px;width:76px;height:18px;line-height:18px;text-align:right;padding:0 4px 0 3px">0,00</div>
<div class="t g" style="left:1071px;top:826px;width:64px;height:18px;line-height:18px;text-align:right;padding:0 4px 0 3px">0,0000</div>
<div class="t g" style="left:1135px;top:826px;width:80px;height:18px;line-height:18px;text-align:right;padding:0 4px 0 3px">63.227,91</div>
<div class="t g" style="left:1215px;top:826px;width:112px;height:18px;line-height:18px;text-align:left;padding:0 3px 0 3px">10.12.25 10:22:49</div>
<div class="t g" style="left:1327px;top:826px;width:76px;height:18px;line-height:18px;text-align:left;padding:0 3px 0 3px;letter-spacing:-0.55px">DEMO</div>
<div class="b " style="left:233px;top:845px;width:1170px;height:19px;background:#fcfcfc"></div>
<div class="t g" style="left:233px;top:845px;width:32px;height:18px;line-height:18px;text-align:right;padding:0 4px 0 3px">2</div>
<div class="t g" style="left:265px;top:845px;width:45px;height:18px;line-height:18px;text-align:right;padding:0 4px 0 3px">180</div>
<div class="t g" style="left:310px;top:845px;width:228px;height:18px;line-height:18px;text-align:left;padding:0 3px 0 3px;letter-spacing:-0.55px">TOPLI OBROK</div>
<div class="t g" style="left:538px;top:845px;width:35px;height:18px;line-height:18px;text-align:center;padding:0 3px 0 3px">B</div>
<div class="t g" style="left:573px;top:845px;width:32px;height:18px;line-height:18px;text-align:right;padding:0 4px 0 3px">21</div>
<div class="t g" style="left:605px;top:845px;width:38px;height:18px;line-height:18px;text-align:right;padding:0 4px 0 3px">049</div>
<div class="t g" style="left:643px;top:845px;width:42px;height:18px;line-height:18px;text-align:right;padding:0 4px 0 3px">049</div>
<div class="t g" style="left:787px;top:845px;width:64px;height:18px;line-height:18px;text-align:right;padding:0 4px 0 3px">180,00</div>
<div class="t g" style="left:851px;top:845px;width:74px;height:18px;line-height:18px;text-align:right;padding:0 4px 0 3px">0,00000</div>
<div class="t g" style="left:925px;top:845px;width:70px;height:18px;line-height:18px;text-align:right;padding:0 4px 0 3px">8.000,00</div>
<div class="t g" style="left:995px;top:845px;width:76px;height:18px;line-height:18px;text-align:right;padding:0 4px 0 3px">0,00</div>
<div class="t g" style="left:1071px;top:845px;width:64px;height:18px;line-height:18px;text-align:right;padding:0 4px 0 3px">0,0000</div>
<div class="t g" style="left:1135px;top:845px;width:80px;height:18px;line-height:18px;text-align:right;padding:0 4px 0 3px">5.843,48</div>
<div class="t g" style="left:1215px;top:845px;width:112px;height:18px;line-height:18px;text-align:left;padding:0 3px 0 3px">10.12.25 10:22:49</div>
<div class="t g" style="left:1327px;top:845px;width:76px;height:18px;line-height:18px;text-align:left;padding:0 3px 0 3px;letter-spacing:-0.55px">DEMO</div>
<div class="b " style="left:233px;top:864px;width:1170px;height:19px;background:#e3e3e3"></div>
<div class="t g" style="left:233px;top:864px;width:32px;height:18px;line-height:18px;text-align:right;padding:0 4px 0 3px">3</div>
<div class="b " style="left:265px;top:864px;width:45px;height:19px;background:#eeeeee"></div>
<div class="t g" style="left:265px;top:864px;width:45px;height:18px;line-height:18px;text-align:right;padding:0 4px 0 3px">181</div>
<div class="t g" style="left:310px;top:864px;width:228px;height:18px;line-height:18px;text-align:left;padding:0 3px 0 3px;letter-spacing:-0.55px">REGRES ZA GODIŠNJI ODMOR</div>
<div class="t g" style="left:538px;top:864px;width:35px;height:18px;line-height:18px;text-align:center;padding:0 3px 0 3px">B</div>
<div class="t g" style="left:573px;top:864px;width:32px;height:18px;line-height:18px;text-align:right;padding:0 4px 0 3px">21</div>
<div class="t g" style="left:605px;top:864px;width:38px;height:18px;line-height:18px;text-align:right;padding:0 4px 0 3px">049</div>
<div class="t g" style="left:643px;top:864px;width:42px;height:18px;line-height:18px;text-align:right;padding:0 4px 0 3px">049</div>
<div class="t g" style="left:787px;top:864px;width:64px;height:18px;line-height:18px;text-align:right;padding:0 4px 0 3px">0,00</div>
<div class="t g" style="left:851px;top:864px;width:74px;height:18px;line-height:18px;text-align:right;padding:0 4px 0 3px">0,00000</div>
<div class="t g" style="left:925px;top:864px;width:70px;height:18px;line-height:18px;text-align:right;padding:0 4px 0 3px">2.000,00</div>
<div class="t g" style="left:995px;top:864px;width:76px;height:18px;line-height:18px;text-align:right;padding:0 4px 0 3px">0,00</div>
<div class="t g" style="left:1071px;top:864px;width:64px;height:18px;line-height:18px;text-align:right;padding:0 4px 0 3px">0,0000</div>
<div class="t g" style="left:1135px;top:864px;width:80px;height:18px;line-height:18px;text-align:right;padding:0 4px 0 3px">1.460,87</div>
<div class="t g" style="left:1215px;top:864px;width:112px;height:18px;line-height:18px;text-align:left;padding:0 3px 0 3px">10.12.25 10:22:49</div>
<div class="t g" style="left:1327px;top:864px;width:76px;height:18px;line-height:18px;text-align:left;padding:0 3px 0 3px;letter-spacing:-0.55px">DEMO</div>
<div class="b" style="left:265px;top:808px;width:1px;height:75px;background:#a9a9a9"></div>
<div class="b" style="left:310px;top:808px;width:1px;height:75px;background:#a9a9a9"></div>
<div class="b" style="left:538px;top:808px;width:1px;height:75px;background:#a9a9a9"></div>
<div class="b" style="left:573px;top:808px;width:1px;height:75px;background:#a9a9a9"></div>
<div class="b" style="left:605px;top:808px;width:1px;height:75px;background:#a9a9a9"></div>
<div class="b" style="left:643px;top:808px;width:1px;height:75px;background:#a9a9a9"></div>
<div class="b" style="left:685px;top:808px;width:1px;height:75px;background:#a9a9a9"></div>
<div class="b" style="left:735px;top:808px;width:1px;height:75px;background:#a9a9a9"></div>
<div class="b" style="left:787px;top:808px;width:1px;height:75px;background:#a9a9a9"></div>
<div class="b" style="left:851px;top:808px;width:1px;height:75px;background:#a9a9a9"></div>
<div class="b" style="left:925px;top:808px;width:1px;height:75px;background:#a9a9a9"></div>
<div class="b" style="left:995px;top:808px;width:1px;height:75px;background:#a9a9a9"></div>
<div class="b" style="left:1071px;top:808px;width:1px;height:75px;background:#a9a9a9"></div>
<div class="b" style="left:1135px;top:808px;width:1px;height:75px;background:#a9a9a9"></div>
<div class="b" style="left:1215px;top:808px;width:1px;height:75px;background:#a9a9a9"></div>
<div class="b" style="left:1327px;top:808px;width:1px;height:75px;background:#a9a9a9"></div>
<div class="b" style="left:233px;top:825px;width:1170px;height:1px;background:#a9a9a9"></div>
<div class="b" style="left:233px;top:844px;width:1170px;height:1px;background:#a9a9a9"></div>
<div class="b" style="left:233px;top:863px;width:1170px;height:1px;background:#a9a9a9"></div>
<div class="b" style="left:233px;top:882px;width:1170px;height:1px;background:#a9a9a9"></div>
<div class="b " style="left:232px;top:928px;width:1172px;height:1px;background:#e6e6e6"></div>
<div class="b" style="left:1137px;top:931px;width:78px;height:20px;background:#fff;border:1px solid #e3e3e3;border-radius:3px"></div>
<div class="t g" style="left:1137px;top:931px;width:78px;height:20px;line-height:20px;text-align:right;padding-right:5px">70.532,26</div>
<div class="b " style="left:232px;top:953px;width:1478px;height:17px;background:#f6f6f6"></div>
<div class="b " style="left:232px;top:952px;width:1172px;height:1px;background:#f0f0f0"></div>
<svg style="left:238px;top:953px" width="400" height="16"><path d="M1.5 3v10" stroke="#666" stroke-width="1"/><path d="M8 3.5L4 8l4 4.5M12 3.5L8 8l4 4.5" fill="none" stroke="#666" stroke-width="1"/><path d="M30 3.5L26 8l4 4.5M34 3.5L30 8l4 4.5" fill="none" stroke="#666" stroke-width="1"/><path d="M56 3.5L52 8l4 4.5" fill="none" stroke="#666" stroke-width="1"/></svg>
<div class="t" style="left:312px;top:954px;font-size:13px">3 od 3</div>
<svg style="left:364px;top:953px" width="300" height="16"><path d="M2 3.5L6 8l-4 4.5" fill="none" stroke="#666"/><path d="M23.5 3.5L27.5 8l-4 4.5M27.5 3.5L31.5 8l-4 4.5" fill="none" stroke="#666"/><path d="M48 3.5L52 8l-4 4.5M52 3.5L56 8l-4 4.5M57.5 3v10" fill="none" stroke="#666"/><path d="M75.5 4v8M71.5 8h8" stroke="#1a8a6e" stroke-width="1.9"/><path d="M95.5 8h8" stroke="#777" stroke-width="1.9"/><path d="M119 13l1-4 6-6 3 3-6 6zM124 5l3 3" fill="none" stroke="#333" stroke-width="1.2"/><path d="M142.5 8.5l3 3 6-6" fill="none" stroke="#999" stroke-width="1.1"/><path d="M168 4l8 8M176 4l-8 8" stroke="#777" stroke-width="1.1"/><path d="M190.5 11.5v-1.5q0-4 4-4h5.5M197 3l3 3-3 3" fill="none" stroke="#333" stroke-width="1.3"/><path d="M219 3v10M214.5 5.5l9 5M214.5 10.5l9-5" stroke="#222" stroke-width="1.3"/><path d="M242 3.5v10M237.5 6l9 5M237.5 11l9-5" stroke="#888" stroke-width="1.1"/><path d="M233 1v4l1.2-1 1.3 2" fill="none" stroke="#555" stroke-width=".9"/><path d="M261.5 3.5h13l-5 5.5v5l-3 1.5v-6.5z" fill="none" stroke="#222" stroke-width="1.2"/></svg>
<div class="b " style="left:233px;top:970px;width:1476px;height:33px;background:#f3f3f3"></div>
<div class="b " style="left:233px;top:970px;width:1476px;height:1px;background:#e3e3e3"></div>
<div class="btn d" style="left:237px;top:974px;width:87px;height:24px;line-height:22px">Obriši stavku</div>
<div class="sep" style="left:326px;top:974px;height:24px"></div>
<div class="btn" style="left:330px;top:974px;width:76px;height:24px;line-height:22px">Štampaj</div>
<div class="sep" style="left:408px;top:974px;height:24px"></div>
<div class="t " style="left:412px;top:979px;font-size:12px">Cena za čas rada za zaposlenog 25 - ĐURIĆ MILAN &quot;+&quot; Prosek za redovan rad</div>
<div class="sep" style="left:1344px;top:974px;height:24px"></div>
<div class="cb" style="left:1350px;top:978px;width:16px;height:16px"></div>
<div class="t " style="left:1371px;top:979px;font-size:12px">Prikaz knjiženja</div>
<div class="sep" style="left:1459px;top:974px;height:24px"></div>
<div class="btn" style="left:1463px;top:974px;width:87px;height:24px;line-height:22px">Potvrdi sve</div>
<div class="sep" style="left:1553px;top:974px;height:24px"></div>
<div class="btn" style="left:1557px;top:974px;width:77px;height:24px;line-height:22px">Vrati sve</div>
<div class="sep" style="left:1636px;top:974px;height:24px"></div>
<div class="btn" style="left:1640px;top:974px;width:67px;height:24px;line-height:22px">Poništi</div>
<div class="sep" style="left:1709px;top:974px;height:24px"></div>
<div class="b" style="left:747px;top:772px;width:175px;height:59px;background:#fafafa;border:1px solid #d8d8d8;box-shadow:2px 3px 4px rgba(0,0,0,0.25)"></div>
<div class="t " style="left:777px;top:781px;font-size:12px;letter-spacing:-0.3px">ZA KATEGORIJU</div>
<div class="b " style="left:752px;top:805px;width:164px;height:21px;background:#e6e6e6;border-radius:4px"></div>
<div class="t " style="left:777px;top:808px;font-size:12px;letter-spacing:-0.3px">ZA ORG.JEDINICU</div>
<div class="b" style="left:746px;top:800px;width:176px;height:32px;border:3px solid #e3121c"></div>
<div class="b " style="left:1709px;top:122px;width:3px;height:882px;background:#a9a9a9"></div>
<div class="b " style="left:1712px;top:122px;width:207px;height:882px;background:#f3f3f3"></div>
<div class="b " style="left:1712px;top:96px;width:48px;height:27px;background:#f5f5f5;border:1px solid #dadada;border-bottom:none;border-radius:5px 5px 0 0"></div>
<div class="b " style="left:1717px;top:97px;width:38px;height:3px;background:#2b579a"></div>
<div class="t " style="left:1712px;top:104px;width:48px;text-align:center;font-size:11.4px">Planer</div>
<div class="b " style="left:1760px;top:96px;width:47px;height:27px;background:#f0f0f0;border:1px solid #dadada;border-bottom:none;border-radius:5px 5px 0 0"></div>
<div class="t " style="left:1760px;top:104px;width:47px;text-align:center;font-size:11.4px">Zadaci</div>
<div class="b " style="left:1808px;top:96px;width:67px;height:27px;background:#f0f0f0;border:1px solid #dadada;border-bottom:none;border-radius:5px 5px 0 0"></div>
<div class="t " style="left:1808px;top:104px;width:67px;text-align:center;font-size:11.4px">Za štampu</div>
<svg style="left:1884px;top:104px" width="30" height="12"><path d="M5 1L1 6l4 5" fill="none" stroke="#c0c0c0" stroke-width="1.1"/><path d="M24 1l4 5-4 5" fill="none" stroke="#333" stroke-width="1.1"/></svg>
<div class="b " style="left:1712px;top:122px;width:207px;height:1px;background:#dadada"></div>
<div class="b " style="left:1713px;top:123px;width:37px;height:881px;background:#ffffff"></div>
<div class="b " style="left:1750px;top:144px;width:1px;height:860px;background:#b5b5b5"></div>
<div class="t " style="left:1757px;top:128px;font-size:12.5px;font-weight:bold;letter-spacing:-0.2px">WEDNESDAY, 10 DEC</div>
<div class="b " style="left:1719px;top:144px;width:183px;height:1px;background:#b0b0b0"></div>
<div class="b" style="left:1751px;top:166px;width:151px;height:0;border-top:1px dotted #b5b5b5"></div>
<div class="t " style="left:1713px;top:148px;font-size:12px;width:30px;text-align:center">4</div>
<div class="t " style="left:1737px;top:145px;font-size:7.5px;color:#444">AM</div>
<div class="b " style="left:1719px;top:188px;width:183px;height:1px;background:#b0b0b0"></div>
<div class="b" style="left:1751px;top:210px;width:151px;height:0;border-top:1px dotted #b5b5b5"></div>
<div class="t " style="left:1713px;top:192px;font-size:12px;width:30px;text-align:center">5</div>
<div class="b " style="left:1719px;top:232px;width:183px;height:1px;background:#b0b0b0"></div>
<div class="b" style="left:1751px;top:254px;width:151px;height:0;border-top:1px dotted #b5b5b5"></div>
<div class="t " style="left:1713px;top:236px;font-size:12px;width:30px;text-align:center">6</div>
<div class="b " style="left:1719px;top:276px;width:183px;height:1px;background:#b0b0b0"></div>
<div class="b" style="left:1751px;top:298px;width:151px;height:0;border-top:1px dotted #b5b5b5"></div>
<div class="t " style="left:1713px;top:280px;font-size:12px;width:30px;text-align:center">7</div>
<div class="b " style="left:1719px;top:320px;width:183px;height:1px;background:#b0b0b0"></div>
<div class="b" style="left:1751px;top:342px;width:151px;height:0;border-top:1px dotted #b5b5b5"></div>
<div class="t " style="left:1713px;top:324px;font-size:12px;width:30px;text-align:center">8</div>
<div class="b " style="left:1719px;top:364px;width:183px;height:1px;background:#b0b0b0"></div>
<div class="b" style="left:1751px;top:386px;width:151px;height:0;border-top:1px dotted #b5b5b5"></div>
<div class="t " style="left:1713px;top:368px;font-size:12px;width:30px;text-align:center">9</div>
<div class="b " style="left:1719px;top:408px;width:183px;height:1px;background:#b0b0b0"></div>
<div class="b" style="left:1751px;top:430px;width:151px;height:0;border-top:1px dotted #b5b5b5"></div>
<div class="t " style="left:1713px;top:412px;font-size:12px;width:30px;text-align:center">10</div>
<div class="b " style="left:1719px;top:452px;width:183px;height:1px;background:#b0b0b0"></div>
<div class="b" style="left:1751px;top:474px;width:151px;height:0;border-top:1px dotted #b5b5b5"></div>
<div class="t " style="left:1713px;top:456px;font-size:12px;width:30px;text-align:center">11</div>
<div class="b " style="left:1719px;top:496px;width:183px;height:1px;background:#b0b0b0"></div>
<div class="b" style="left:1751px;top:518px;width:151px;height:0;border-top:1px dotted #b5b5b5"></div>
<div class="t " style="left:1713px;top:500px;font-size:12px;width:30px;text-align:center">12</div>
<div class="t " style="left:1737px;top:497px;font-size:7.5px;color:#444">PM</div>
<div class="b " style="left:1719px;top:540px;width:183px;height:1px;background:#b0b0b0"></div>
<div class="b" style="left:1751px;top:562px;width:151px;height:0;border-top:1px dotted #b5b5b5"></div>
<div class="t " style="left:1713px;top:544px;font-size:12px;width:30px;text-align:center">1</div>
<div class="b " style="left:1719px;top:584px;width:183px;height:1px;background:#b0b0b0"></div>
<div class="b" style="left:1751px;top:606px;width:151px;height:0;border-top:1px dotted #b5b5b5"></div>
<div class="t " style="left:1713px;top:588px;font-size:12px;width:30px;text-align:center">2</div>
<div class="b " style="left:1719px;top:628px;width:183px;height:1px;background:#b0b0b0"></div>
<div class="b" style="left:1751px;top:650px;width:151px;height:0;border-top:1px dotted #b5b5b5"></div>
<div class="t " style="left:1713px;top:632px;font-size:12px;width:30px;text-align:center">3</div>
<div class="b " style="left:1719px;top:672px;width:183px;height:1px;background:#b0b0b0"></div>
<div class="b" style="left:1751px;top:694px;width:151px;height:0;border-top:1px dotted #b5b5b5"></div>
<div class="t " style="left:1713px;top:676px;font-size:12px;width:30px;text-align:center">4</div>
<div class="b " style="left:1719px;top:716px;width:183px;height:1px;background:#b0b0b0"></div>
<div class="b" style="left:1751px;top:738px;width:151px;height:0;border-top:1px dotted #b5b5b5"></div>
<div class="t " style="left:1713px;top:720px;font-size:12px;width:30px;text-align:center">5</div>
<div class="b " style="left:1719px;top:760px;width:183px;height:1px;background:#b0b0b0"></div>
<div class="b" style="left:1751px;top:782px;width:151px;height:0;border-top:1px dotted #b5b5b5"></div>
<div class="t " style="left:1713px;top:764px;font-size:12px;width:30px;text-align:center">6</div>
<div class="b " style="left:1719px;top:804px;width:183px;height:1px;background:#b0b0b0"></div>
<div class="b" style="left:1751px;top:826px;width:151px;height:0;border-top:1px dotted #b5b5b5"></div>
<div class="t " style="left:1713px;top:808px;font-size:12px;width:30px;text-align:center">7</div>
<div class="b " style="left:1719px;top:848px;width:183px;height:1px;background:#b0b0b0"></div>
<div class="b" style="left:1751px;top:870px;width:151px;height:0;border-top:1px dotted #b5b5b5"></div>
<div class="t " style="left:1713px;top:852px;font-size:12px;width:30px;text-align:center">8</div>
<div class="b " style="left:1719px;top:892px;width:183px;height:1px;background:#b0b0b0"></div>
<div class="b" style="left:1751px;top:914px;width:151px;height:0;border-top:1px dotted #b5b5b5"></div>
<div class="t " style="left:1713px;top:896px;font-size:12px;width:30px;text-align:center">9</div>
<div class="b " style="left:1719px;top:936px;width:183px;height:1px;background:#b0b0b0"></div>
<div class="b" style="left:1751px;top:958px;width:151px;height:0;border-top:1px dotted #b5b5b5"></div>
<div class="t " style="left:1713px;top:940px;font-size:12px;width:30px;text-align:center">10</div>
<div class="b " style="left:1719px;top:980px;width:183px;height:1px;background:#b0b0b0"></div>
<div class="b" style="left:1751px;top:1002px;width:151px;height:0;border-top:1px dotted #b5b5b5"></div>
<div class="t " style="left:1713px;top:984px;font-size:12px;width:30px;text-align:center">11</div>
<div class="b " style="left:1717px;top:429px;width:32px;height:2px;background:#7a7a7a"></div>
<div class="b" style="left:1751px;top:481px;width:25px;height:163px;background:#f3f3f3;border:1px solid #dcdcdc;border-left:none;border-radius:0 4px 4px 0"></div>
<svg style="left:1760px;top:495px" width="8" height="9"><path d="M7 0v9L0 4.5z" fill="#222"/></svg>
<div class="t" style="left:1764px;top:572px;font-size:10.7px;transform:translate(-50%,-50%) rotate(-90deg);transform-origin:center">Prethodni zadaci</div>
<div class="b" style="left:1877px;top:481px;width:26px;height:163px;background:#f3f3f3;border:1px solid #dcdcdc;border-right:none;border-radius:4px 0 0 4px"></div>
<svg style="left:1886px;top:495px" width="8" height="9"><path d="M0 0v9L7 4.5z" fill="#222"/></svg>
<div class="t" style="left:1890px;top:572px;font-size:10.7px;transform:translate(-50%,-50%) rotate(-90deg);transform-origin:center">Budući zadaci</div>
<svg style="left:1905px;top:126px" width="10" height="9"><path d="M5 1l4 7H1z" fill="#a8a8a8"/></svg>
<svg style="left:1905px;top:990px" width="10" height="9"><path d="M5 8l4-7H1z" fill="#a8a8a8"/></svg>
<div class="b " style="left:1907px;top:281px;width:7px;height:686px;background:#a0a0a0;border-radius:4px"></div>
<div class="b " style="left:1917px;top:122px;width:2px;height:882px;background:#d8d8d8"></div>
<div class="b " style="left:0px;top:1004px;width:1920px;height:28px;background:#2b579a"></div>
<div class="t " style="left:1706px;top:1012px;color:#fff;font-size:11.5px">T R X</div>
<div class="b " style="left:1753px;top:1006px;width:1px;height:24px;background:#234a85"></div>
<div class="b " style="left:1782px;top:1006px;width:1px;height:24px;background:#234a85"></div>
<div class="b " style="left:1820px;top:1006px;width:1px;height:24px;background:#234a85"></div>
<div class="b " style="left:1855px;top:1006px;width:1px;height:24px;background:#234a85"></div>
<div class="b " style="left:1889px;top:1006px;width:1px;height:24px;background:#234a85"></div>
<svg style="left:1760px;top:1009px" width="18" height="19"><path d="M1.5 1.5h15v11h-8l-3 4v-4h-4z" fill="none" stroke="#fff" stroke-width="1.3"/><circle cx="6.5" cy="5.5" r=".9" fill="#fff"/><circle cx="11.5" cy="5.5" r=".9" fill="#fff"/><path d="M5.5 8.5q3.5 2.5 7 0" fill="none" stroke="#fff" stroke-width="1.1"/></svg>
<div class="t " style="left:1787px;top:1012px;color:#9fb4d6;font-size:11px">CAPS</div>
<div class="t " style="left:1824px;top:1012px;color:#9fb4d6;font-size:11px">NUM</div>
<div class="t " style="left:1857px;top:1012px;color:#9fb4d6;font-size:11px">SCRL</div>
<div class="t " style="left:1894px;top:1012px;color:#9fb4d6;font-size:11px">INS</div>
<div class="t " style="left:1599px;top:939px;font-size:19.6px;line-height:22px;color:rgba(120,120,120,0.45)">Activate Windows</div>
<div class="t " style="left:1599px;top:964px;font-size:14.9px;line-height:17px;color:rgba(120,120,120,0.45)">Go to Settings to activate Windows.</div>
</body></html>
